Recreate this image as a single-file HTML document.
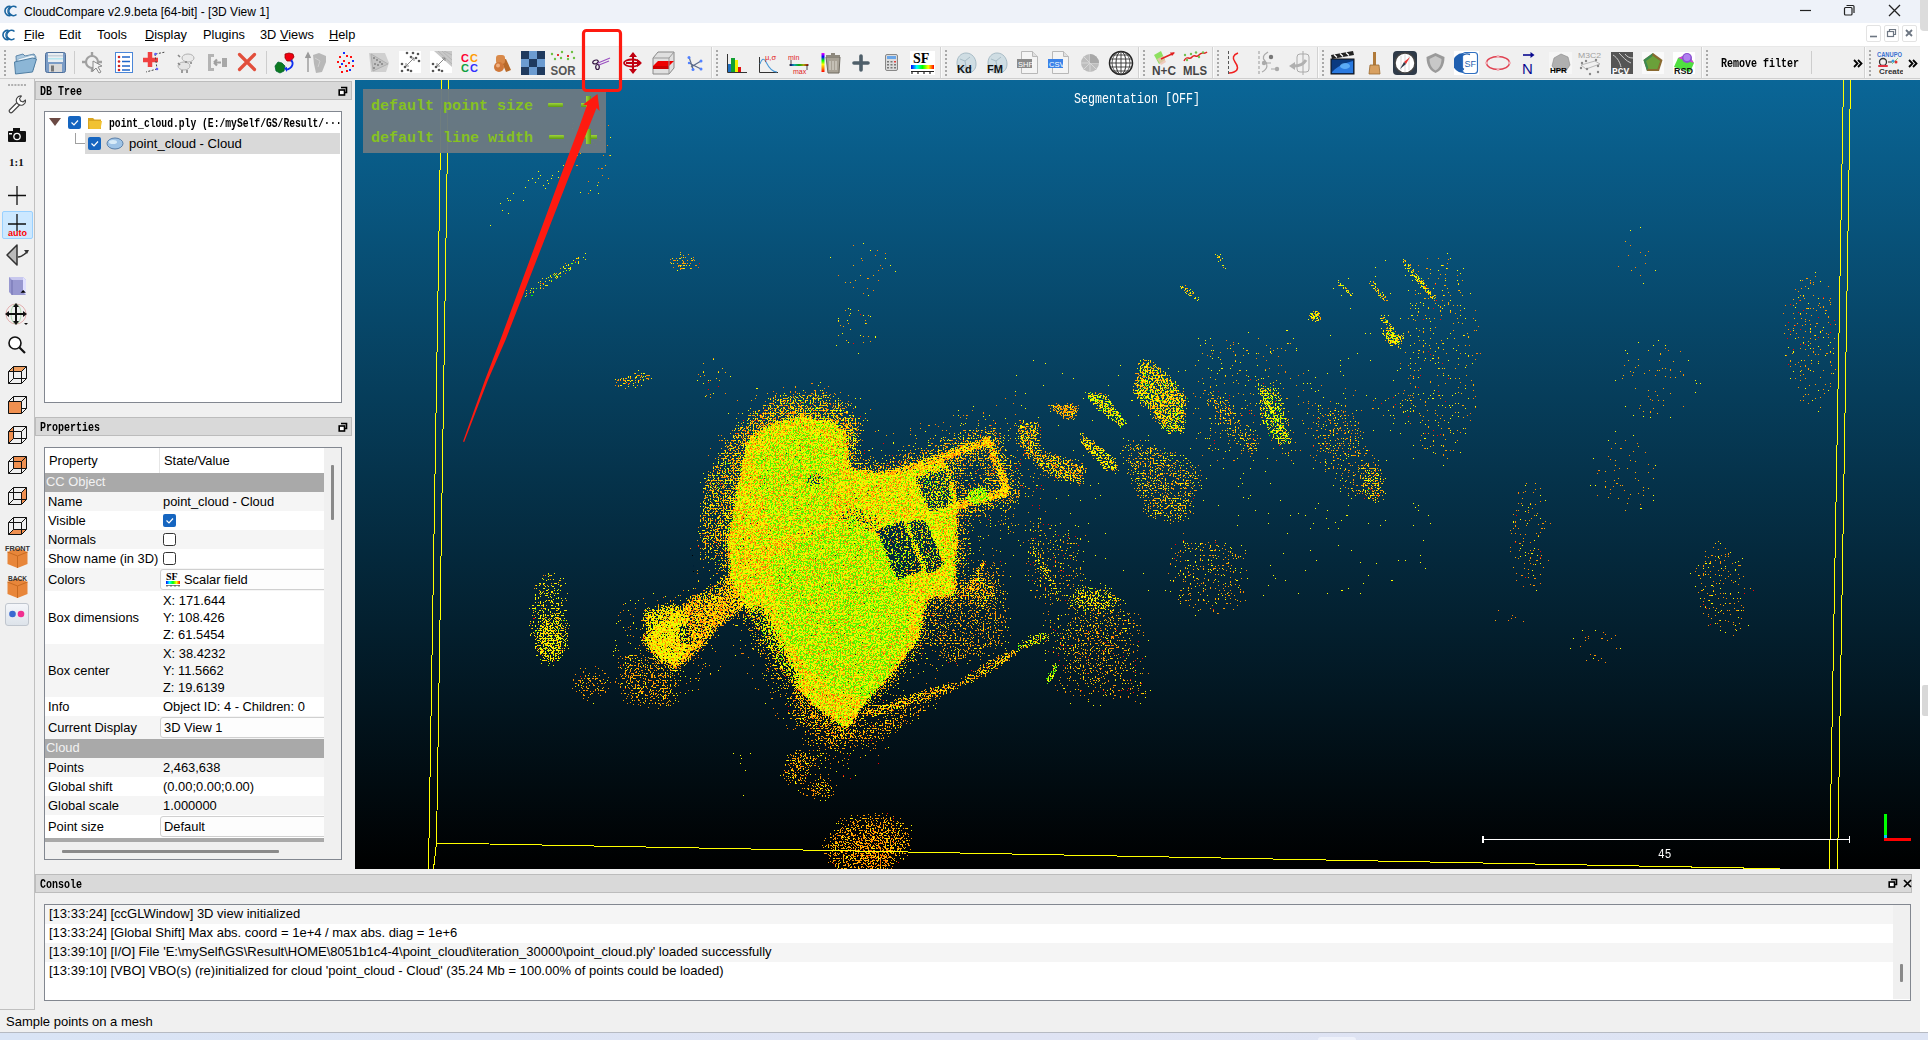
<!DOCTYPE html>
<html><head><meta charset="utf-8"><style>
html,body{margin:0;padding:0;width:1928px;height:1040px;overflow:hidden;background:#fff;position:relative}
.t{position:absolute;white-space:pre;line-height:1.15}
u{text-decoration:underline;text-underline-offset:1px}
</style></head><body>
<svg width="0" height="0" style="position:absolute"><defs><linearGradient id="rbv" x1="0" x2="0" y1="0" y2="1"><stop offset="0" stop-color="#f0f"/><stop offset=".2" stop-color="#00f"/><stop offset=".4" stop-color="#0f0"/><stop offset=".6" stop-color="#ff0"/><stop offset=".8" stop-color="#f80"/><stop offset="1" stop-color="#f00"/></linearGradient><linearGradient id="rb" x1="0" x2="1"><stop offset="0" stop-color="#00f"/><stop offset=".25" stop-color="#0ff"/><stop offset=".5" stop-color="#0f0"/><stop offset=".75" stop-color="#ff0"/><stop offset="1" stop-color="#f00"/></linearGradient></defs></svg>
<div style="position:absolute;left:0px;top:0px;width:1920px;height:23px;background:#eef2f9"></div><svg style="position:absolute;left:3px;top:5px" width="15" height="12" viewBox="0 0 15 12"><path d="M7.5 1.5A4.6 4.6 0 1 0 7.5 10.5" fill="none" stroke="#1a65a0" stroke-width="1.6"/><path d="M13.5 2.5A4.6 4.6 0 1 0 13.5 9.5" fill="none" stroke="#1a65a0" stroke-width="1.6"/><path d="M8.5 1.5A4.6 4.6 0 0 0 8.5 10.5" fill="none" stroke="#1a65a0" stroke-width="1.2"/></svg><div class="t" style="left:24px;top:6px;font-size:12px;color:#000;font-family:'Liberation Sans', sans-serif;">CloudCompare v2.9.beta [64-bit] - [3D View 1]</div><svg style="position:absolute;left:1790px;top:0" width="130" height="23"><path d="M10 10.5h11" stroke="#222" stroke-width="1.2"/><rect x="54.5" y="7.5" width="7.5" height="7.5" fill="none" stroke="#222" stroke-width="1.2" rx="1"/><path d="M56.5 5.5h6.5a1 1 0 0 1 1 1V13" fill="none" stroke="#222" stroke-width="1.2"/><path d="M99 5l11 11M110 5l-11 11" stroke="#222" stroke-width="1.3"/></svg><div style="position:absolute;left:1920px;top:0px;width:8px;height:1040px;background:#ffffff"></div><div style="position:absolute;left:1920px;top:0px;width:8px;height:31px;background:#dcdcdc;border-bottom-left-radius:4px"></div><div style="position:absolute;left:1922px;top:685px;width:6px;height:31px;background:#d8d8d8;border-radius:2px 0 0 2px"></div><div style="position:absolute;left:0px;top:23px;width:1920px;height:23px;background:#fff"></div><div class="t" style="left:24px;top:28px;font-size:12.8px;color:#000;font-family:'Liberation Sans', sans-serif;"><u>F</u>ile</div><div class="t" style="left:59px;top:28px;font-size:12.8px;color:#000;font-family:'Liberation Sans', sans-serif;">Edit</div><div class="t" style="left:97px;top:28px;font-size:12.8px;color:#000;font-family:'Liberation Sans', sans-serif;">Tools</div><div class="t" style="left:145px;top:28px;font-size:12.8px;color:#000;font-family:'Liberation Sans', sans-serif;"><u>D</u>isplay</div><div class="t" style="left:203px;top:28px;font-size:12.8px;color:#000;font-family:'Liberation Sans', sans-serif;">Plugins</div><div class="t" style="left:260px;top:28px;font-size:12.8px;color:#000;font-family:'Liberation Sans', sans-serif;">3D <u>V</u>iews</div><div class="t" style="left:329px;top:28px;font-size:12.8px;color:#000;font-family:'Liberation Sans', sans-serif;"><u>H</u>elp</div><svg style="position:absolute;left:1px;top:28.5px" width="15" height="12" viewBox="0 0 15 12"><path d="M7.5 1.5A4.6 4.6 0 1 0 7.5 10.5" fill="none" stroke="#1a65a0" stroke-width="1.6"/><path d="M13.5 2.5A4.6 4.6 0 1 0 13.5 9.5" fill="none" stroke="#1a65a0" stroke-width="1.6"/><path d="M8.5 1.5A4.6 4.6 0 0 0 8.5 10.5" fill="none" stroke="#1a65a0" stroke-width="1.2"/></svg><div style="position:absolute;left:1866px;top:25px;width:15px;height:17px;background:#fff;border:1px solid #e3e3e3;border-radius:2px;box-sizing:border-box"></div><div style="position:absolute;left:1884px;top:25px;width:15px;height:17px;background:#fff;border:1px solid #e3e3e3;border-radius:2px;box-sizing:border-box"></div><div style="position:absolute;left:1902px;top:25px;width:15px;height:17px;background:#fff;border:1px solid #e3e3e3;border-radius:2px;box-sizing:border-box"></div><svg style="position:absolute;left:1866px;top:25px" width="54" height="17"><path d="M4 11.5h7" stroke="#6d7682" stroke-width="1.6"/><rect x="21.5" y="6.5" width="6" height="5" fill="none" stroke="#6d7682" stroke-width="1.2"/><path d="M23.5 6.5V4.5h6v5h-2" fill="none" stroke="#6d7682" stroke-width="1.2"/><path d="M40 5l6 6M46 5l-6 6" stroke="#6d7682" stroke-width="1.8"/></svg><div style="position:absolute;left:0px;top:46px;width:1920px;height:1px;background:#e8e8e8"></div><div style="position:absolute;left:0px;top:47px;width:1920px;height:32px;background:#f0f0f0"></div><div style="position:absolute;left:0px;top:78px;width:1920px;height:1px;background:#cfcfcf"></div><svg style="position:absolute;left:4px;top:50px" width="3" height="28" viewBox="0 0 3 28"><rect x="0" y="0" width="2" height="2" fill="#a8a8a8"/><rect x="0" y="4" width="2" height="2" fill="#a8a8a8"/><rect x="0" y="8" width="2" height="2" fill="#a8a8a8"/><rect x="0" y="12" width="2" height="2" fill="#a8a8a8"/><rect x="0" y="16" width="2" height="2" fill="#a8a8a8"/><rect x="0" y="20" width="2" height="2" fill="#a8a8a8"/><rect x="0" y="24" width="2" height="2" fill="#a8a8a8"/></svg><svg style="position:absolute;left:13px;top:50px" width="25" height="25" viewBox="0 0 25 25"><path d="M3 6l7-2 2 2 9-2 2 3-3 13-16 3z" fill="#a9c8e0" stroke="#5f88ab" stroke-width="1"/><path d="M5 9l14-4 3 1-6 12-12 4z" fill="#eef5fa" stroke="#8fb0c8" stroke-width=".8"/><path d="M1.5 12l18-4 4 1-4 13-17 2z" fill="#8cb6d6" stroke="#4f7ea3" stroke-width="1"/></svg><svg style="position:absolute;left:44px;top:51px" width="24" height="24" viewBox="0 0 24 24"><rect x="1.5" y="1.5" width="20" height="20" rx="2" fill="#7b9cc6" stroke="#4e6f9a"/><rect x="4" y="2" width="15" height="9" fill="#e9eef2"/><rect x="4" y="4" width="15" height="1.5" fill="#c5d0da"/><rect x="4" y="7" width="15" height="1.5" fill="#b5e6f0"/><rect x="5" y="13" width="13" height="8" fill="#d8d8d8"/><rect x="7" y="14.5" width="3" height="6" fill="#777"/></svg><div style="position:absolute;left:74px;top:51px;width:1px;height:23px;background:#cdcdcd"></div><svg style="position:absolute;left:81px;top:50px" width="24" height="25" viewBox="0 0 24 25"><circle cx="11" cy="12" r="6" fill="none" stroke="#a0a0a0" stroke-width="2.2"/><path d="M11 2v5M11 17v5M1 12h5M16 12h5" stroke="#a0a0a0" stroke-width="2.4"/><path d="M12 11l9 5-4 1 3 5-2 1-3-5-3 3z" fill="#f4f4f4" stroke="#8a8a8a" stroke-width="1"/></svg><svg style="position:absolute;left:114px;top:51px" width="20" height="23" viewBox="0 0 20 23"><rect x="1.5" y="1.5" width="17" height="20" fill="#fff" stroke="#4a86d8"/><g fill="#d02020"><circle cx="5" cy="6" r="1.3"/><circle cx="5" cy="10.5" r="1.3"/><circle cx="5" cy="15" r="1.3"/><circle cx="5" cy="19" r="1.3"/></g><g stroke="#1f66c8" stroke-width="1.6"><path d="M8 6h8M8 10.5h8M8 15h8M8 19h8"/></g></svg><svg style="position:absolute;left:142px;top:50px" width="26" height="25" viewBox="0 0 26 25"><path d="M8 2v15M1 10h15" stroke="#f04040" stroke-width="4.5"/><path d="M13.5 4l10-2M13 4l2 15M15 19l-11 3" stroke="#444" stroke-width="1" stroke-dasharray="2 1.5" fill="none"/><circle cx="13.5" cy="4" r="1.3" fill="#6060ff"/><circle cx="15" cy="19" r="1.3" fill="#6060ff"/></svg><svg style="position:absolute;left:175px;top:50px" width="22" height="25" viewBox="0 0 22 25"><ellipse cx="13" cy="8" rx="6" ry="4" fill="#eaeaea" stroke="#b0b0b0"/><ellipse cx="9" cy="16" rx="6" ry="4" fill="#e5e5e5" stroke="#b0b0b0"/><path d="M3 5l2 2M3 13l2 2M7 20v3M12 20v3M11 11v2M16 12v2" stroke="#888" stroke-width="1.6"/></svg><svg style="position:absolute;left:206px;top:50px" width="23" height="25" viewBox="0 0 23 25"><path d="M2 4h6v3H5v11h3v3H2z" fill="#b4b4b4"/><rect x="16" y="8" width="5" height="9" fill="#a8a8a8"/><path d="M15 12.5H8M8 12.5l3-3M8 12.5l3 3" stroke="#a0a0a0" stroke-width="2.2" fill="none"/></svg><svg style="position:absolute;left:237px;top:52px" width="21" height="21" viewBox="0 0 21 21"><path d="M2.5 2.5l15 15M17.5 2.5l-15 15" stroke="#e24f3c" stroke-width="3.2" stroke-linecap="round"/></svg><div style="position:absolute;left:266px;top:51px;width:1px;height:23px;background:#cdcdcd"></div><svg style="position:absolute;left:274px;top:51px" width="21" height="23" viewBox="0 0 21 23"><path d="M11 3l4-1 4 1 1 3-3 4-4 0-2-3z" fill="#f00010" stroke="#900" stroke-width=".8"/><path d="M1 15l3-4 4 1 3 3-1 5-4 2-4-2z" fill="#0e7a20" stroke="#063" stroke-width=".8"/><path d="M17 9c3 3 2 8-5 10" stroke="#1030f0" stroke-width="1.8" fill="none"/><path d="M10 17l3 4 0-5z" fill="#1030f0"/></svg><svg style="position:absolute;left:305px;top:50px" width="23" height="25" viewBox="0 0 23 25"><path d="M3 22V5M0.5 8L3 3l2.5 5" stroke="#9a9a9a" stroke-width="1.4" fill="#9a9a9a"/><path d="M8 5l6-2 7 3 0 6-4 10-6 1-2-9z" fill="#b8b8b8"/><path d="M10 8l5 3-2 6" stroke="#cfcfcf" fill="none"/></svg><svg style="position:absolute;left:337px;top:52px" width="18" height="21" viewBox="0 0 18 21"><g fill="#ff1010"><rect x="2" y="4" width="2" height="2"/><rect x="9" y="3" width="2" height="2"/><rect x="13" y="4" width="2" height="2"/><rect x="0" y="9" width="2" height="2"/><rect x="6" y="8" width="2" height="2"/><rect x="11" y="10" width="2" height="2"/><rect x="2" y="14" width="2" height="2"/><rect x="8" y="13" width="2" height="2"/><rect x="15" y="13" width="2" height="2"/><rect x="4" y="19" width="2" height="2"/><rect x="9" y="18" width="2" height="2"/></g><g fill="#1030ff"><rect x="6" y="0" width="2" height="2"/><rect x="15" y="8" width="2" height="2"/><rect x="4" y="11" width="2" height="2"/><rect x="12" y="17" width="2" height="2"/></g></svg><svg style="position:absolute;left:368px;top:51px" width="22" height="23" viewBox="0 0 22 23"><path d="M1 2h16l4 10-3 9H3z" fill="#d0d0d0"/><path d="M3 3l17 10L5 20z" fill="#c4c4c4" stroke="#b0b0b0"/><g fill="#555"><circle cx="6" cy="7" r=".8"/><circle cx="9" cy="9" r=".8"/><circle cx="12" cy="11" r=".8"/><circle cx="7" cy="13" r=".8"/><circle cx="10" cy="14" r=".8"/><circle cx="14" cy="13" r=".8"/><circle cx="6" cy="17" r=".8"/></g></svg><svg style="position:absolute;left:399px;top:51px" width="22" height="22" viewBox="0 0 22 22"><rect x="0" y="0" width="22" height="22" fill="#fff"/><g fill="#555"><circle cx="3" cy="13" r="1.3"/><circle cx="6" cy="16" r="1.3"/><circle cx="3" cy="20" r="1.3"/><circle cx="9" cy="19" r="1.3"/><circle cx="12" cy="20" r="1.3"/><circle cx="8" cy="2" r="1.3"/><circle cx="14" cy="2" r="1.3"/><circle cx="19" cy="3" r="1.3"/><circle cx="12" cy="6" r="1.3"/><circle cx="17" cy="7" r="1.3"/><circle cx="20" cy="10" r="1.3"/></g><path d="M7 15l8-8M7 15v-3M7 15h3M15 7v3M15 7h-3" stroke="#888" stroke-width="1" fill="none"/></svg><svg style="position:absolute;left:430px;top:51px" width="22" height="22" viewBox="0 0 22 22"><rect x="0" y="0" width="22" height="22" fill="#fff"/><path d="M4 0h18v16z" fill="#c8c8c8"/><path d="M8 0l14 13M12 0l10 9M22 4L14 0" stroke="#aaa" stroke-width=".6"/><g fill="#555"><circle cx="3" cy="13" r="1.3"/><circle cx="6" cy="16" r="1.3"/><circle cx="3" cy="20" r="1.3"/><circle cx="9" cy="19" r="1.3"/><circle cx="12" cy="20" r="1.3"/></g><path d="M7 15l8-8M7 15v-3M7 15h3M15 7v3M15 7h-3" stroke="#888" stroke-width="1" fill="none"/></svg><svg style="position:absolute;left:461px;top:52px" width="20" height="22" viewBox="0 0 20 22"><g font-family="Liberation Sans" font-weight="bold" font-size="11"><text x="0" y="10" fill="#ff0030">C</text><text x="9" y="10" fill="#ff9a00">C</text><text x="0" y="20" fill="#10a040">C</text><text x="9" y="20" fill="#3030ff">C</text></g></svg><svg style="position:absolute;left:493px;top:54px" width="18" height="19" viewBox="0 0 18 19"><path d="M8 6l5-1 5 11-5 2z" fill="#b86a2a"/><rect x="3" y="1" width="9" height="9" rx="3" fill="#d98a4a"/><circle cx="6" cy="13" r="5" fill="#d0783a"/><circle cx="5" cy="11.5" r="2" fill="#f0b080"/></svg><svg style="position:absolute;left:521px;top:51px" width="24" height="24" viewBox="0 0 24 24"><rect width="24" height="24" fill="#6b9bd0"/><g fill="#1f3a5e"><rect x="0" y="0" width="8" height="8"/><rect x="16" y="0" width="8" height="8"/><rect x="8" y="8" width="8" height="8"/><rect x="0" y="16" width="8" height="8"/><rect x="16" y="16" width="8" height="8"/></g></svg><svg style="position:absolute;left:550px;top:50px" width="27" height="26" viewBox="0 0 27 26"><g fill="#6cc040"><circle cx="2" cy="4" r="1.2"/><circle cx="12" cy="2" r="1.2"/><circle cx="22" cy="2" r="1.2"/><circle cx="5" cy="9" r="1.2"/><circle cx="11" cy="8" r="1.2"/><circle cx="18" cy="9" r="1.2"/><circle cx="24" cy="8" r="1.2"/></g><path d="M7 4l2 2M9 4l-2 2M17 5l2 2M19 5l-2 2" stroke="#e03030" stroke-width="1"/><text x="0.5" y="24.5" font-family="Liberation Sans" font-weight="bold" font-size="13" fill="#555" textLength="25" lengthAdjust="spacingAndGlyphs">SOR</text></svg><svg style="position:absolute;left:592px;top:56px" width="19" height="15" viewBox="0 0 19 15"><ellipse cx="3.5" cy="6" rx="2.8" ry="1.8" fill="none" stroke="#301040" stroke-width="1.2" transform="rotate(-20 3.5 6)"/><ellipse cx="5.5" cy="11" rx="1.8" ry="2.5" fill="none" stroke="#301040" stroke-width="1.2"/><path d="M6 7l12-5M7 9l10-4" stroke="#9a50c0" stroke-width="1.2"/></svg><svg style="position:absolute;left:623px;top:52px" width="20" height="22" viewBox="0 0 20 22"><path d="M10 1v20M3 11h14" stroke="#c00010" stroke-width="2"/><path d="M10 0l-4 5h8zM10 22l-4-5h8zM19 11l-5-4v8z" fill="#c00010"/><ellipse cx="9" cy="11" rx="8" ry="3.5" fill="none" stroke="#c00010" stroke-width="1.8"/></svg><svg style="position:absolute;left:651px;top:51px" width="24" height="24" viewBox="0 0 24 24"><path d="M2 7l5-6h16v16l-5 6H2z" fill="#e0e0e0" stroke="#888" stroke-width="1"/><path d="M2 15l5-5h16l-5 5z" fill="#ee0000"/><path d="M2 15h16v3H2z" fill="#cc0000"/><path d="M2 7h16v16M18 7l5-6" stroke="#999" fill="none"/></svg><svg style="position:absolute;left:687px;top:56px" width="16" height="16" viewBox="0 0 16 16"><path d="M2 1l4 12M2 7l12 6M14 5L4 11" stroke="#5a6a8a" stroke-width="1.2"/><g fill="#5080ff"><circle cx="2" cy="1.5" r="1.5"/><circle cx="14" cy="5" r="1.5"/><circle cx="14" cy="13" r="1.5"/><circle cx="6" cy="13.5" r="1.5"/><circle cx="2" cy="7" r="1.2"/></g></svg><div style="position:absolute;left:711px;top:47px;width:1px;height:31px;background:#d2d2d2"></div><div style="position:absolute;left:712px;top:47px;width:1px;height:31px;background:#fafafa"></div><svg style="position:absolute;left:716px;top:50px" width="3" height="28" viewBox="0 0 3 28"><rect x="0" y="0" width="2" height="2" fill="#a8a8a8"/><rect x="0" y="4" width="2" height="2" fill="#a8a8a8"/><rect x="0" y="8" width="2" height="2" fill="#a8a8a8"/><rect x="0" y="12" width="2" height="2" fill="#a8a8a8"/><rect x="0" y="16" width="2" height="2" fill="#a8a8a8"/><rect x="0" y="20" width="2" height="2" fill="#a8a8a8"/><rect x="0" y="24" width="2" height="2" fill="#a8a8a8"/></svg><svg style="position:absolute;left:726px;top:54px" width="22" height="20" viewBox="0 0 22 20"><path d="M1.5 0v18.5H21" stroke="#333" stroke-width="1" fill="none"/><rect x="2" y="10" width="3" height="8" fill="#1f6fc0"/><rect x="5" y="4" width="4" height="14" fill="#10a030"/><rect x="9" y="6" width="3" height="12" fill="#f0f000"/><rect x="12" y="13" width="3" height="5" fill="#e01010"/></svg><svg style="position:absolute;left:758px;top:53px" width="21" height="21" viewBox="0 0 21 21"><path d="M1.5 4v15.5H20" stroke="#333" stroke-width="1" fill="none"/><path d="M2 11c2-6 4-6 6-2s5 10 11 10" stroke="#4a9ad8" stroke-width="1.1" fill="none"/><text x="7" y="7" font-family="Liberation Sans" font-size="7.5" fill="#e02020">μ,σ</text></svg><svg style="position:absolute;left:788px;top:53px" width="23" height="21" viewBox="0 0 23 21"><text x="0" y="6.5" font-family="Liberation Sans" font-size="7" fill="#e02020">min</text><text x="5" y="20.5" font-family="Liberation Sans" font-size="7" fill="#e02020">max</text><rect x="2" y="11" width="18" height="2" fill="url(#rb)"/><path d="M1 12h20M3 7v6M19 12v5" stroke="#222" stroke-width=".8"/></svg><svg style="position:absolute;left:821px;top:53px" width="21" height="21" viewBox="0 0 21 21"><rect x="0.5" y="0" width="3" height="19" fill="url(#rbv)"/><path d="M5 4h14l-1 16H7z" fill="#a8a296" stroke="#6e6a60"/><rect x="5" y="2" width="14" height="2" fill="#8e897e"/><rect x="10" y="0" width="4" height="2" fill="#8e897e"/><path d="M9 8v9M12 8v9M15 8v9" stroke="#e0ddd5" stroke-width="1"/></svg><svg style="position:absolute;left:852px;top:54px" width="18" height="18" viewBox="0 0 18 18"><path d="M9 2v14M2 9h14" stroke="#4f5f6a" stroke-width="3.6" stroke-linecap="round"/></svg><svg style="position:absolute;left:885px;top:54px" width="14" height="18" viewBox="0 0 14 18"><rect x="0.5" y="0.5" width="12" height="16" rx="1.5" fill="#dcdcdc" stroke="#888"/><rect x="2" y="2" width="9" height="3" fill="#6aa6e8"/><g fill="#777"><rect x="2" y="7" width="2" height="1.5"/><rect x="5.5" y="7" width="2" height="1.5"/><rect x="9" y="7" width="2" height="1.5" fill="#e04040"/><rect x="2" y="10" width="2" height="1.5"/><rect x="5.5" y="10" width="2" height="1.5"/><rect x="9" y="10" width="2" height="1.5"/><rect x="2" y="13" width="2" height="1.5"/><rect x="5.5" y="13" width="2" height="1.5"/><rect x="9" y="13" width="2" height="1.5"/></g></svg><svg style="position:absolute;left:910px;top:51px" width="25" height="24" viewBox="0 0 25 24"><rect width="25" height="24" fill="#fff"/><text x="3" y="12" font-family="Liberation Serif" font-weight="bold" font-size="14" fill="#000">SF</text><rect x="1" y="14" width="23" height="4" fill="url(#rb)"/><path d="M1 20.5h23M2 20v3M8 20v3M14 20v3M20 20v3" stroke="#222" stroke-width="1.2"/></svg><div style="position:absolute;left:940px;top:47px;width:1px;height:31px;background:#d2d2d2"></div><div style="position:absolute;left:941px;top:47px;width:1px;height:31px;background:#fafafa"></div><svg style="position:absolute;left:945px;top:50px" width="3" height="28" viewBox="0 0 3 28"><rect x="0" y="0" width="2" height="2" fill="#a8a8a8"/><rect x="0" y="4" width="2" height="2" fill="#a8a8a8"/><rect x="0" y="8" width="2" height="2" fill="#a8a8a8"/><rect x="0" y="12" width="2" height="2" fill="#a8a8a8"/><rect x="0" y="16" width="2" height="2" fill="#a8a8a8"/><rect x="0" y="20" width="2" height="2" fill="#a8a8a8"/><rect x="0" y="24" width="2" height="2" fill="#a8a8a8"/></svg><svg style="position:absolute;left:954px;top:51px" width="24" height="24" viewBox="0 0 24 24"><path d="M3 12c0-6 4-10 9-10 6 0 10 5 10 11 0 6-4 9-9 9-6 0-10-4-10-10z" fill="#cfdde3" stroke="#a8bcc6"/><path d="M6 8l5 2 5-4M11 10l1 6 6 1M12 16l-5 2" stroke="#a8bcc6" fill="none"/><text x="3" y="22" font-family="Liberation Sans" font-weight="bold" font-size="11" fill="#111">Kd</text></svg><svg style="position:absolute;left:985px;top:51px" width="24" height="24" viewBox="0 0 24 24"><path d="M3 12c0-6 4-10 9-10 6 0 10 5 10 11 0 6-4 9-9 9-6 0-10-4-10-10z" fill="#cfdde3" stroke="#a8bcc6"/><path d="M6 8l5 2 5-4M11 10l1 6 6 1M12 16l-5 2" stroke="#a8bcc6" fill="none"/><text x="2" y="22" font-family="Liberation Sans" font-weight="bold" font-size="11" fill="#111">FM</text></svg><svg style="position:absolute;left:1017px;top:51px" width="22" height="24" viewBox="0 0 22 24"><path d="M4.5 0.5h11l5 5v17h-16z" fill="#f4f4f4" stroke="#b8b8b8"/><path d="M15.5 0.5v5h5" fill="#e0e0e0" stroke="#b8b8b8"/><rect x="0" y="8" width="15" height="9" fill="#8a8a8a"/><text x="1" y="15.5" font-family="Liberation Sans" font-size="7.5" fill="#fff">SHP</text></svg><svg style="position:absolute;left:1048px;top:51px" width="22" height="24" viewBox="0 0 22 24"><path d="M4.5 0.5h11l5 5v17h-16z" fill="#f4f4f4" stroke="#b8b8b8"/><path d="M15.5 0.5v5h5" fill="#e0e0e0" stroke="#b8b8b8"/><rect x="0" y="8" width="15" height="9" fill="#3b82e8"/><text x="1" y="15.5" font-family="Liberation Sans" font-size="7.5" fill="#fff">CSV</text></svg><svg style="position:absolute;left:1080px;top:53px" width="20" height="20" viewBox="0 0 20 20"><circle cx="10" cy="10" r="9" fill="#bdbdbd"/><path d="M10 1v18M1 10h18M3.6 3.6l12.8 12.8M16.4 3.6L3.6 16.4" stroke="#d8d8d8" stroke-width="1"/><path d="M10 10V1A9 9 0 0 1 19 10z" fill="#a8a8a8"/></svg><svg style="position:absolute;left:1108px;top:50px" width="26" height="26" viewBox="0 0 26 26"><circle cx="13" cy="13" r="11.5" fill="#fff" stroke="#222" stroke-width="1.5"/><ellipse cx="13" cy="13" rx="5" ry="11.5" fill="none" stroke="#333"/><ellipse cx="13" cy="13" rx="9" ry="11.5" fill="none" stroke="#333" stroke-width=".8"/><path d="M13 1.5v23M2 9h22M2 17h22M1.5 13h23M4 5h18M4 21h18" stroke="#333" stroke-width=".9"/></svg><div style="position:absolute;left:1138px;top:47px;width:1px;height:31px;background:#d2d2d2"></div><div style="position:absolute;left:1139px;top:47px;width:1px;height:31px;background:#fafafa"></div><svg style="position:absolute;left:1143px;top:50px" width="3" height="28" viewBox="0 0 3 28"><rect x="0" y="0" width="2" height="2" fill="#a8a8a8"/><rect x="0" y="4" width="2" height="2" fill="#a8a8a8"/><rect x="0" y="8" width="2" height="2" fill="#a8a8a8"/><rect x="0" y="12" width="2" height="2" fill="#a8a8a8"/><rect x="0" y="16" width="2" height="2" fill="#a8a8a8"/><rect x="0" y="20" width="2" height="2" fill="#a8a8a8"/><rect x="0" y="24" width="2" height="2" fill="#a8a8a8"/></svg><svg style="position:absolute;left:1152px;top:51px" width="25" height="24" viewBox="0 0 25 24"><path d="M2 4l7-4 4 9-6 4z" fill="#8ee060"/><path d="M5 8l6-3 3 6-5 3z" fill="#f0c0b0" opacity=".8"/><path d="M9 8l13-6" stroke="#e02020" stroke-width="1.4"/><path d="M23 1.5l-5 0 2 3.5z" fill="#e02020"/><text x="0" y="23.5" font-family="Liberation Sans" font-weight="bold" font-size="12.5" fill="#444" textLength="24" lengthAdjust="spacingAndGlyphs">N+C</text></svg><svg style="position:absolute;left:1183px;top:51px" width="25" height="24" viewBox="0 0 25 24"><path d="M1 10c3-7 5 0 8-4s4 2 7-2 5 0 8-3" stroke="#e02020" stroke-width="1.4" fill="none"/><g fill="#70c050"><circle cx="2" cy="4" r="1.2"/><circle cx="8" cy="3" r="1.2"/><circle cx="13" cy="1.5" r="1.2"/><circle cx="20" cy="1.5" r="1.2"/><circle cx="4" cy="9" r="1.2"/><circle cx="16" cy="6" r="1.2"/></g><text x="0" y="23.5" font-family="Liberation Sans" font-weight="bold" font-size="13" fill="#444" textLength="24" lengthAdjust="spacingAndGlyphs">MLS</text></svg><div style="position:absolute;left:1212px;top:47px;width:1px;height:31px;background:#d2d2d2"></div><div style="position:absolute;left:1213px;top:47px;width:1px;height:31px;background:#fafafa"></div><svg style="position:absolute;left:1217px;top:50px" width="3" height="28" viewBox="0 0 3 28"><rect x="0" y="0" width="2" height="2" fill="#a8a8a8"/><rect x="0" y="4" width="2" height="2" fill="#a8a8a8"/><rect x="0" y="8" width="2" height="2" fill="#a8a8a8"/><rect x="0" y="12" width="2" height="2" fill="#a8a8a8"/><rect x="0" y="16" width="2" height="2" fill="#a8a8a8"/><rect x="0" y="20" width="2" height="2" fill="#a8a8a8"/><rect x="0" y="24" width="2" height="2" fill="#a8a8a8"/></svg><svg style="position:absolute;left:1227px;top:51px" width="15" height="24" viewBox="0 0 15 24"><path d="M1.5 0v24" stroke="#555" stroke-width="1" stroke-dasharray="3 2"/><path d="M11 2c-5 2-6 5-3 9s4 8-1 10c-2 1-4 1-5 1" stroke="#f02020" stroke-width="1.5" fill="none"/></svg><svg style="position:absolute;left:1258px;top:51px" width="22" height="24" viewBox="0 0 22 24"><path d="M1 0v24" stroke="#999" stroke-width="1" stroke-dasharray="3 2"/><path d="M10 1c-5 3-6 6-3 9s3 8-3 11" stroke="#aaa" stroke-width="1.3" fill="none"/><circle cx="13" cy="6" r="2.2" fill="#777"/><circle cx="6" cy="12" r="2.2" fill="#aaa"/><circle cx="19" cy="18" r="2.2" fill="#aaa"/><path d="M7 12h6M13 18h4" stroke="#aaa"/></svg><svg style="position:absolute;left:1289px;top:51px" width="22" height="24" viewBox="0 0 22 24"><rect x="8" y="3" width="12" height="18" rx="3" fill="none" stroke="#aaa"/><path d="M14 0v24" stroke="#aaa"/><path d="M17 9c-3 5-7 6-12 6" stroke="#b0b0b0" stroke-width="3" fill="none"/><path d="M0 15l6-4v8z" fill="#b0b0b0"/></svg><div style="position:absolute;left:1317px;top:47px;width:1px;height:31px;background:#d2d2d2"></div><div style="position:absolute;left:1318px;top:47px;width:1px;height:31px;background:#fafafa"></div><svg style="position:absolute;left:1322px;top:50px" width="3" height="28" viewBox="0 0 3 28"><rect x="0" y="0" width="2" height="2" fill="#a8a8a8"/><rect x="0" y="4" width="2" height="2" fill="#a8a8a8"/><rect x="0" y="8" width="2" height="2" fill="#a8a8a8"/><rect x="0" y="12" width="2" height="2" fill="#a8a8a8"/><rect x="0" y="16" width="2" height="2" fill="#a8a8a8"/><rect x="0" y="20" width="2" height="2" fill="#a8a8a8"/><rect x="0" y="24" width="2" height="2" fill="#a8a8a8"/></svg><svg style="position:absolute;left:1330px;top:51px" width="25" height="24" viewBox="0 0 25 24"><path d="M1 4l22-4 1 4-22 4z" fill="#222"/><path d="M4 3.5l3 3M10 2.5l3 3M16 1.5l3 3" stroke="#fff" stroke-width="1.3"/><rect x="1" y="8" width="23" height="15" fill="#0a3a80" stroke="#111"/><path d="M2 21c8-8 14-9 21-11v12H2z" fill="#2a7ae0"/><ellipse cx="15" cy="15" rx="5" ry="3" fill="#70c0ff" opacity=".7"/></svg><svg style="position:absolute;left:1368px;top:51px" width="13" height="25" viewBox="0 0 13 25"><rect x="5" y="1" width="3" height="13" fill="#b07a3a"/><path d="M2 14h9l1 9H1z" fill="#d8a060" stroke="#9a6a30" stroke-width=".8"/></svg><svg style="position:absolute;left:1392px;top:50px" width="26" height="26" viewBox="0 0 26 26"><rect x="1" y="1" width="24" height="24" rx="4" fill="#2e3a48"/><circle cx="13" cy="13" r="10" fill="#fff"/><circle cx="13" cy="13" r="10" fill="none" stroke="#444" stroke-width="1.5"/><path d="M9 6v14M13 4v18M17 6v14" stroke="#ccc" stroke-width=".7"/><path d="M18 7l-4 7-2-2z" fill="#e83030"/><path d="M8 19l4-7 2 2z" fill="#2e3a48"/></svg><svg style="position:absolute;left:1425px;top:52px" width="21" height="22" viewBox="0 0 21 22"><path d="M10.5 1l9 4c0 9-4 14-9 16-5-2-9-7-9-16z" fill="#9a9a9a"/><path d="M10.5 4l6 3c0 6-3 10-6 11.5-3-1.5-6-5.5-6-11.5z" fill="#c8c8c8"/></svg><svg style="position:absolute;left:1454px;top:51px" width="25" height="24" viewBox="0 0 25 24"><rect width="25" height="24" fill="#fff"/><path d="M9 2a10 10 0 0 0 0 20z" fill="#1f5fb0"/><rect x="8.5" y="1.5" width="15" height="21" rx="3" fill="none" stroke="#2f6fc0" stroke-width="1.2"/><path d="M16 3.5a8 8 0 0 0-6 15" stroke="#1f5fb0" stroke-width="1.4" fill="none"/><text x="10.5" y="16" font-family="Liberation Sans" font-size="9" fill="#1f5fb0">SF</text></svg><svg style="position:absolute;left:1485px;top:54px" width="26" height="18" viewBox="0 0 26 18"><ellipse cx="13" cy="9" rx="11.5" ry="6.5" fill="none" stroke="#e04050" stroke-width="1.4"/><g fill="#f0b0b8"><circle cx="13" cy="2.5" r="1.4"/><circle cx="13" cy="15.5" r="1.4"/><circle cx="1.5" cy="9" r="1.4"/><circle cx="24.5" cy="9" r="1.4"/></g></svg><svg style="position:absolute;left:1522px;top:51px" width="14" height="24" viewBox="0 0 14 24"><path d="M1 4h10" stroke="#0a0a90" stroke-width="1.6"/><path d="M12.5 4l-4-3v6z" fill="#0a0a90"/><text x="0" y="22.5" font-family="Liberation Sans" font-size="15" fill="#0a0a90">N</text></svg><svg style="position:absolute;left:1549px;top:52px" width="23" height="23" viewBox="0 0 23 23"><rect width="23" height="22" fill="#f6f6f6"/><path d="M5 6l7-4 7 3 2 8-4 6H7l-4-5z" fill="#b0b0b0" stroke="#888" stroke-width=".6"/><text x="1" y="21" font-family="Liberation Sans" font-weight="bold" font-size="8" fill="#000">HPR</text></svg><svg style="position:absolute;left:1578px;top:51px" width="24" height="25" viewBox="0 0 24 25"><text x="0" y="7" font-family="Liberation Sans" font-size="8" fill="#a0a0a0" textLength="23" lengthAdjust="spacingAndGlyphs">M3C2</text><path d="M3 14l14-4 5 3-14 5z" fill="none" stroke="#aaa" stroke-width=".8"/><g fill="#888"><circle cx="4" cy="12" r="1.2"/><circle cx="8" cy="10" r="1.2"/><circle cx="18" cy="9" r="1.2"/><circle cx="3" cy="17" r="1.2"/><circle cx="9" cy="18" r="1.2"/><circle cx="20" cy="15" r="1.2"/><circle cx="12" cy="23" r="1.2"/><circle cx="20" cy="21" r="1.2"/></g></svg><svg style="position:absolute;left:1611px;top:52px" width="23" height="23" viewBox="0 0 23 23"><rect width="22" height="22" fill="#555"/><path d="M2 3c5 3 7 8 8 12M8 1c4 4 7 8 12 10M14 2c2 3 5 4 8 4" stroke="#ccc" stroke-width="1" fill="none"/><text x="1" y="21.5" font-family="Liberation Mono" font-weight="bold" font-size="9.5" fill="#fff">PCV</text></svg><svg style="position:absolute;left:1642px;top:52px" width="22" height="22" viewBox="0 0 22 22"><rect width="22" height="22" fill="#fafafa"/><path d="M11 1l9.5 7-3.5 11H5L1.5 8z" fill="#8a6a30"/><path d="M11 4l7 5-2.7 8H6.7L4 9z" fill="#5a9a30"/><path d="M11 1l-9.5 7 3.5 11" fill="#3c8a50"/><path d="M11 4l7 5-2.7 8H6.7L4 9z" fill="#6aa03a"/></svg><svg style="position:absolute;left:1673px;top:52px" width="22" height="23" viewBox="0 0 22 23"><rect width="22" height="22" fill="#fff"/><path d="M1 15l4-9 10-4 6 9-4 9z" fill="#50e040"/><path d="M5 6l10-4 6 9" fill="#f020f0" opacity=".85"/><ellipse cx="14" cy="6" rx="5" ry="5" fill="#8a50d0"/><ellipse cx="14" cy="5.5" rx="3.5" ry="3.5" fill="#b080f0"/><text x="1" y="21.5" font-family="Liberation Sans" font-weight="bold" font-size="9" fill="#111">RSD</text></svg><div style="position:absolute;left:1701px;top:47px;width:1px;height:31px;background:#d2d2d2"></div><div style="position:absolute;left:1702px;top:47px;width:1px;height:31px;background:#fafafa"></div><svg style="position:absolute;left:1706px;top:50px" width="3" height="28" viewBox="0 0 3 28"><rect x="0" y="0" width="2" height="2" fill="#a8a8a8"/><rect x="0" y="4" width="2" height="2" fill="#a8a8a8"/><rect x="0" y="8" width="2" height="2" fill="#a8a8a8"/><rect x="0" y="12" width="2" height="2" fill="#a8a8a8"/><rect x="0" y="16" width="2" height="2" fill="#a8a8a8"/><rect x="0" y="20" width="2" height="2" fill="#a8a8a8"/><rect x="0" y="24" width="2" height="2" fill="#a8a8a8"/></svg><div class="t" style="left:1721px;top:57px;font-size:12.5px;font-family:'Liberation Mono',monospace;font-weight:bold;color:#000;transform:scaleX(0.8);transform-origin:0 0">Remove filter</div><div style="position:absolute;left:1811px;top:51px;width:1px;height:23px;background:#cdcdcd"></div><svg style="position:absolute;left:1853px;top:59px" width="10" height="9" viewBox="0 0 10 9"><path d="M1 1l3.5 3.5L1 8M5 1l3.5 3.5L5 8" stroke="#000" stroke-width="1.8" fill="none"/></svg><div style="position:absolute;left:1864px;top:47px;width:1px;height:31px;background:#d2d2d2"></div><div style="position:absolute;left:1865px;top:47px;width:1px;height:31px;background:#fafafa"></div><svg style="position:absolute;left:1869px;top:50px" width="3" height="28" viewBox="0 0 3 28"><rect x="0" y="0" width="2" height="2" fill="#a8a8a8"/><rect x="0" y="4" width="2" height="2" fill="#a8a8a8"/><rect x="0" y="8" width="2" height="2" fill="#a8a8a8"/><rect x="0" y="12" width="2" height="2" fill="#a8a8a8"/><rect x="0" y="16" width="2" height="2" fill="#a8a8a8"/><rect x="0" y="20" width="2" height="2" fill="#a8a8a8"/><rect x="0" y="24" width="2" height="2" fill="#a8a8a8"/></svg><svg style="position:absolute;left:1877px;top:51px" width="26" height="24" viewBox="0 0 26 24"><text x="0" y="6" font-family="Liberation Sans" font-weight="bold" font-size="6.5" fill="#3a70d0" textLength="25" lengthAdjust="spacingAndGlyphs">CANUPO</text><circle cx="6" cy="11" r="3.5" fill="none" stroke="#333" stroke-width="1.3"/><path d="M11 11h4" stroke="#333"/><path d="M15 13l6-6" stroke="#8c8" /><circle cx="19" cy="11" r="1.5" fill="#e03030"/><circle cx="16" cy="10" r="1.5" fill="#3aa0e0"/><rect x="1" y="14" width="10" height="2" rx="1" fill="#e03040"/><text x="2" y="23" font-family="Liberation Sans" font-weight="bold" font-size="8" fill="#333">Create</text></svg><svg style="position:absolute;left:1908px;top:59px" width="10" height="9" viewBox="0 0 10 9"><path d="M1 1l3.5 3.5L1 8M5 1l3.5 3.5L5 8" stroke="#000" stroke-width="1.8" fill="none"/></svg><div style="position:absolute;left:0px;top:79px;width:1920px;height:953px;background:#f0f0f0"></div><div style="position:absolute;left:34px;top:79px;width:1px;height:931px;background:#c0c0c0"></div><div style="position:absolute;left:0px;top:1009px;width:35px;height:1px;background:#c0c0c0"></div><svg style="position:absolute;left:8px;top:84px" width="20" height="3" viewBox="0 0 20 3"><rect x="0.0" y="0" width="2" height="2" fill="#b0b0b0"/><rect x="3.2" y="0" width="2" height="2" fill="#b0b0b0"/><rect x="6.4" y="0" width="2" height="2" fill="#b0b0b0"/><rect x="9.6" y="0" width="2" height="2" fill="#b0b0b0"/><rect x="12.8" y="0" width="2" height="2" fill="#b0b0b0"/><rect x="16.0" y="0" width="2" height="2" fill="#b0b0b0"/></svg><svg style="position:absolute;left:8px;top:94px" width="18" height="20" viewBox="0 0 18 20"><path d="M3 17l8.5-8.5" stroke="#444" stroke-width="4.6" stroke-linecap="round"/><path d="M3 17l8.5-8.5" stroke="#fff" stroke-width="2.4" stroke-linecap="round"/><path d="M9.5 9.5a4.5 4.5 0 0 1 4-7.5l-2 2.5 1 2.5 2.5 1 2.5-2a4.5 4.5 0 0 1-7.5 4z" fill="#fff" stroke="#444" stroke-width="1.1" stroke-linejoin="round"/></svg><svg style="position:absolute;left:7px;top:127px" width="20" height="16" viewBox="0 0 20 16"><rect x="1" y="4" width="18" height="11" rx="1" fill="#111"/><rect x="6" y="1" width="7" height="4" fill="#111"/><circle cx="10" cy="9.5" r="3.8" fill="#fff"/><circle cx="10" cy="9.5" r="2.5" fill="#111"/><rect x="2" y="6" width="3" height="1.5" fill="#fff"/></svg><div class="t" style="left:9px;top:157px;font:bold 11px/1 'Liberation Serif',serif;color:#111">1:1</div><svg style="position:absolute;left:7px;top:185px" width="20" height="21" viewBox="0 0 20 21"><path d="M10 1v19M1 10.5h18" stroke="#111" stroke-width="1.3"/></svg><div style="position:absolute;left:2px;top:211px;width:31px;height:28px;background:#cce8ff;border:1px solid #99d1ff;box-sizing:border-box;border-radius:2px"></div><svg style="position:absolute;left:7px;top:213px" width="20" height="24" viewBox="0 0 20 24"><path d="M10 1v17M1 11h18" stroke="#111" stroke-width="1.3"/><text x="1" y="23" font-family="Liberation Sans" font-weight="bold" font-size="9" fill="#f00">auto</text></svg><svg style="position:absolute;left:5px;top:243px" width="25" height="24" viewBox="0 0 25 24"><path d="M12 2L2 12l10 10z" fill="#bbb" stroke="#333" stroke-width="1.5" stroke-linejoin="round"/><path d="M13 14c4 0 6-2 9-5" stroke="#333" stroke-width="1.4" fill="none"/><path d="M24 7l-5 0 3 4z" fill="#333"/></svg><svg style="position:absolute;left:5px;top:274px" width="24" height="24" viewBox="0 0 24 24"><path d="M4 3h14l3 3v15H7l-3-3z" fill="#9898d0"/><path d="M4 3h14l3 3H7z" fill="#c8c8ee"/><path d="M18 3l3 3v15l-3-3z" fill="#e0e0ff"/><path d="M7 6v15" stroke="#7070b0"/><path d="M18 20l3 3h-6z" fill="#000" transform="translate(2 -2) scale(0.9)"/></svg><svg style="position:absolute;left:4px;top:302px" width="26" height="24" viewBox="0 0 26 24"><ellipse cx="12" cy="12" rx="10" ry="10" fill="none" stroke="#e0a0a0" stroke-width=".8"/><ellipse cx="12" cy="12" rx="5" ry="10" fill="none" stroke="#a0d0a0" stroke-width=".8"/><path d="M12 3v18M3 12h18" stroke="#111" stroke-width="2"/><path d="M12 1l-3 4h6zM12 23l-3-4h6zM1 12l4-3v6zM23 12l-4-3v6z" fill="#111"/><path d="M20 21l4 0-2 2z" fill="#111"/></svg><svg style="position:absolute;left:7px;top:335px" width="20" height="20" viewBox="0 0 20 20"><circle cx="8" cy="8" r="6" fill="#fff" stroke="#111" stroke-width="1.6"/><path d="M12.5 12.5l5.5 5.5" stroke="#111" stroke-width="2.2"/></svg><svg style="position:absolute;left:7px;top:364px" width="21" height="22" viewBox="0 0 21 22"><path d="M1.5 7.5l5-5h13l-5 5z" fill="#f0a060"/><path d="M6.5 2.5h13v12h-13z" fill="none" stroke="#111"/><path d="M1.5 7.5h13v12h-13z" fill="none" stroke="#111"/><path d="M1.5 7.5l5-5M14.5 7.5l5-5M14.5 19.5l5-5M1.5 19.5l5-5" stroke="#111"/></svg><svg style="position:absolute;left:7px;top:394px" width="21" height="22" viewBox="0 0 21 22"><path d="M1.5 7.5h13v12h-13z" fill="#f09050"/><path d="M6.5 2.5h13v12h-13z" fill="none" stroke="#111"/><path d="M1.5 7.5h13v12h-13z" fill="#f09050" stroke="#111"/><path d="M1.5 7.5l5-5M14.5 7.5l5-5M14.5 19.5l5-5" stroke="#111"/></svg><svg style="position:absolute;left:7px;top:424px" width="21" height="22" viewBox="0 0 21 22"><path d="M1.5 7.5l5-5v12l-5 5z" fill="#f09050"/><path d="M6.5 2.5h13v12h-13z" fill="none" stroke="#111"/><path d="M1.5 7.5h13v12h-13z" fill="none" stroke="#111"/><path d="M1.5 7.5l5-5M14.5 7.5l5-5M14.5 19.5l5-5M1.5 19.5l5-5" stroke="#111"/></svg><svg style="position:absolute;left:7px;top:454px" width="21" height="22" viewBox="0 0 21 22"><path d="M6.5 2.5h13v12h-13z" fill="#f09050"/><path d="M6.5 2.5h13v12h-13z" fill="none" stroke="#111"/><path d="M1.5 7.5h13v12h-13z" fill="none" stroke="#111"/><path d="M1.5 7.5l5-5M14.5 7.5l5-5M14.5 19.5l5-5M1.5 19.5l5-5" stroke="#111"/></svg><svg style="position:absolute;left:7px;top:485px" width="21" height="22" viewBox="0 0 21 22"><path d="M14.5 7.5l5-5v12l-5 5z" fill="#f09050"/><path d="M6.5 2.5h13v12h-13z" fill="none" stroke="#111"/><path d="M1.5 7.5h13v12h-13z" fill="none" stroke="#111"/><path d="M1.5 7.5l5-5M14.5 7.5l5-5M14.5 19.5l5-5M1.5 19.5l5-5" stroke="#111"/></svg><svg style="position:absolute;left:7px;top:515px" width="21" height="22" viewBox="0 0 21 22"><path d="M1.5 19.5l5-5h13l-5 5z" fill="#f09050"/><path d="M6.5 2.5h13v12h-13z" fill="none" stroke="#111"/><path d="M1.5 7.5h13v12h-13z" fill="none" stroke="#111"/><path d="M1.5 7.5l5-5M14.5 7.5l5-5M14.5 19.5l5-5M1.5 19.5l5-5" stroke="#111"/></svg><svg style="position:absolute;left:4px;top:542px" width="27" height="27" viewBox="0 0 27 27"><path d="M13.5 6l10 4v12l-10 4-10-4V10z" fill="#e8863a"/><path d="M3.5 10l10 4 10-4" stroke="#c86a20" fill="none"/><path d="M13.5 14v12" stroke="#c86a20"/><text x="1" y="9" font-family="Liberation Sans" font-weight="bold" font-size="8" fill="#333" textLength="25" lengthAdjust="spacingAndGlyphs">FRONT</text></svg><svg style="position:absolute;left:4px;top:572px" width="27" height="27" viewBox="0 0 27 27"><path d="M13.5 6l10 4v12l-10 4-10-4V10z" fill="#e8863a"/><path d="M3.5 10l10 4 10-4" stroke="#c86a20" fill="none"/><path d="M13.5 14v12" stroke="#c86a20"/><text x="4" y="9" font-family="Liberation Sans" font-weight="bold" font-size="8" fill="#333" textLength="19" lengthAdjust="spacingAndGlyphs">BACK</text></svg><div style="position:absolute;left:5px;top:603px;width:24px;height:23px;background:linear-gradient(#f4f6fa,#dde3ea);border:1px solid #c0c6ce;box-sizing:border-box;border-radius:3px"></div><svg style="position:absolute;left:8px;top:609px" width="18" height="10" viewBox="0 0 18 10"><circle cx="4.5" cy="5" r="3.3" fill="#3a6ad0"/><circle cx="13" cy="5" r="3.3" fill="#f03090"/></svg><div style="position:absolute;left:35px;top:81px;width:317px;height:19px;background:#d9d9d9;border:1px solid #bcbcbc;box-sizing:border-box"></div><div class="t" style="left:40px;top:85px;font-size:12.2px;color:#000;font-family:'Liberation Mono', monospace;font-weight:bold;transform:scaleX(0.82);transform-origin:0 0;">DB Tree</div><svg style="position:absolute;left:338px;top:86px" width="10" height="10"><path d="M3 1.5h5.5v5H6.5" fill="none" stroke="#000" stroke-width="1.6"/><rect x="1.2" y="4" width="5.3" height="5" fill="#fff" stroke="#000" stroke-width="1.6"/></svg><div style="position:absolute;left:44px;top:111px;width:298px;height:292px;background:#fff;border:1px solid #828790;box-sizing:border-box"></div><svg style="position:absolute;left:49px;top:116px" width="60" height="16"><path d="M0 2h12l-6 8z" fill="#6b4a44"/><rect x="19" y="0" width="13" height="13" rx="2" fill="#1565c0"/><path d="M22.5 6.5l2.5 2.5 4-4.5" stroke="#fff" stroke-width="1.2" fill="none"/><path d="M39 2h5l1.5 1.5h6.5v9.5h-13z" fill="#d9a520"/><path d="M40 5h13l-1.5 8h-11z" fill="#f1c232"/></svg><div class="t" style="left:109px;top:117px;font-size:12.5px;color:#000;font-family:'Liberation Mono', monospace;font-weight:bold;transform:scaleX(0.775);transform-origin:0 0;">point_cloud.ply (E:/mySelf/GS/Result/···</div><div style="position:absolute;left:85px;top:133px;width:255px;height:21px;background:#d9d9d9"></div><div style="position:absolute;left:75px;top:133px;width:1px;height:11px;background:#a0a0a0"></div><div style="position:absolute;left:75px;top:143px;width:10px;height:1px;background:#a0a0a0"></div><svg style="position:absolute;left:88px;top:137px" width="40" height="14"><rect x="0" y="0" width="13" height="13" rx="2" fill="#1565c0"/><path d="M3.5 6.5l2.5 2.5 4-4.5" stroke="#fff" stroke-width="1.2" fill="none"/><ellipse cx="27" cy="6.5" rx="8" ry="5.5" fill="#9ec3e6" stroke="#5a7fa8" stroke-width="1"/><ellipse cx="25" cy="5" rx="4" ry="2" fill="#d8ebf8"/></svg><div class="t" style="left:129px;top:136px;font-size:13.1px;color:#000;font-family:'Liberation Sans', sans-serif;">point_cloud - Cloud</div><div style="position:absolute;left:35px;top:417px;width:317px;height:19px;background:#d9d9d9;border:1px solid #bcbcbc;box-sizing:border-box"></div><div class="t" style="left:40px;top:421px;font-size:12.2px;color:#000;font-family:'Liberation Mono', monospace;font-weight:bold;transform:scaleX(0.82);transform-origin:0 0;">Properties</div><svg style="position:absolute;left:338px;top:422px" width="10" height="10"><path d="M3 1.5h5.5v5H6.5" fill="none" stroke="#000" stroke-width="1.6"/><rect x="1.2" y="4" width="5.3" height="5" fill="#fff" stroke="#000" stroke-width="1.6"/></svg><div style="position:absolute;left:44px;top:447px;width:298px;height:413px;background:#f0f0f0;border:1px solid #828790;box-sizing:border-box"></div><div style="position:absolute;left:45px;top:448px;width:279px;height:25px;background:#fff"></div><div style="position:absolute;left:159px;top:448px;width:1px;height:25px;background:#e6e6e6"></div><div class="t" style="left:49px;top:454px;font-size:12.9px;color:#000;font-family:'Liberation Sans', sans-serif;">Property</div><div class="t" style="left:164px;top:454px;font-size:12.9px;color:#000;font-family:'Liberation Sans', sans-serif;">State/Value</div><div style="position:absolute;left:45px;top:473px;width:279px;height:19px;background:#a9a9a9"></div><div class="t" style="left:46px;top:475px;font-size:12.9px;color:#f2f2f2;font-family:'Liberation Sans', sans-serif;">CC Object</div><div style="position:absolute;left:45px;top:492px;width:279px;height:19px;background:#f5f5f5"></div><div class="t" style="left:48px;top:494.5px;font-size:12.9px;color:#000;font-family:'Liberation Sans', sans-serif;">Name</div><div class="t" style="left:163px;top:494.5px;font-size:12.9px;color:#000;font-family:'Liberation Sans', sans-serif;">point_cloud - Cloud</div><div style="position:absolute;left:45px;top:511px;width:279px;height:19px;background:#fff"></div><div class="t" style="left:48px;top:513.5px;font-size:12.9px;color:#000;font-family:'Liberation Sans', sans-serif;">Visible</div><svg style="position:absolute;left:163px;top:514px" width="14" height="14"><rect x="0" y="0" width="13" height="13" rx="2" fill="#1565c0"/><path d="M3.5 6.5l2.5 2.5 4-4.5" stroke="#fff" stroke-width="1.2" fill="none"/></svg><div style="position:absolute;left:45px;top:530px;width:279px;height:19px;background:#f5f5f5"></div><div class="t" style="left:48px;top:532.5px;font-size:12.9px;color:#000;font-family:'Liberation Sans', sans-serif;">Normals</div><svg style="position:absolute;left:163px;top:533px" width="14" height="14"><rect x="0.5" y="0.5" width="12" height="12" rx="2" fill="#fff" stroke="#333" stroke-width="1"/></svg><div style="position:absolute;left:45px;top:549px;width:279px;height:19px;background:#fff"></div><div class="t" style="left:48px;top:551.5px;font-size:12.9px;color:#000;font-family:'Liberation Sans', sans-serif;">Show name (in 3D)</div><svg style="position:absolute;left:163px;top:552px" width="14" height="14"><rect x="0.5" y="0.5" width="12" height="12" rx="2" fill="#fff" stroke="#333" stroke-width="1"/></svg><div style="position:absolute;left:45px;top:568px;width:279px;height:23px;background:#f5f5f5"></div><div class="t" style="left:48px;top:572.5px;font-size:12.9px;color:#000;font-family:'Liberation Sans', sans-serif;">Colors</div><div style="position:absolute;left:160px;top:569px;width:170px;height:21px;background:#fdfdfd;border:1px solid #d0d0d0;border-radius:3px;box-sizing:border-box"></div><svg style="position:absolute;left:165px;top:571px" width="16" height="16"><text x="1" y="9" font-family="Liberation Serif" font-weight="bold" font-size="10">SF</text><rect x="1" y="10" width="14" height="3" fill="url(#rb)"/><path d="M1 14.5h14M2 14v2M6 14v2M10 14v2M14 14v2" stroke="#333" stroke-width="0.6"/></svg><div class="t" style="left:184px;top:572.5px;font-size:12.9px;color:#000;font-family:'Liberation Sans', sans-serif;">Scalar field</div><div style="position:absolute;left:45px;top:591px;width:279px;height:53px;background:#fff"></div><div class="t" style="left:48px;top:610.5px;font-size:12.9px;color:#000;font-family:'Liberation Sans', sans-serif;">Box dimensions</div><div class="t" style="left:163px;top:592px;font-size:12.9px;line-height:17px;font-family:'Liberation Sans', sans-serif">X: 171.644<br>Y: 108.426<br>Z: 61.5454</div><div style="position:absolute;left:45px;top:644px;width:279px;height:53px;background:#f5f5f5"></div><div class="t" style="left:48px;top:663.5px;font-size:12.9px;color:#000;font-family:'Liberation Sans', sans-serif;">Box center</div><div class="t" style="left:163px;top:645px;font-size:12.9px;line-height:17px;font-family:'Liberation Sans', sans-serif">X: 38.4232<br>Y: 11.5662<br>Z: 19.6139</div><div style="position:absolute;left:45px;top:697px;width:279px;height:19px;background:#fff"></div><div class="t" style="left:48px;top:699.5px;font-size:12.9px;color:#000;font-family:'Liberation Sans', sans-serif;">Info</div><div class="t" style="left:163px;top:699.5px;font-size:12.9px;color:#000;font-family:'Liberation Sans', sans-serif;">Object ID: 4 - Children: 0</div><div style="position:absolute;left:45px;top:716px;width:279px;height:23px;background:#f5f5f5"></div><div class="t" style="left:48px;top:720.5px;font-size:12.9px;color:#000;font-family:'Liberation Sans', sans-serif;">Current Display</div><div style="position:absolute;left:160px;top:717px;width:170px;height:21px;background:#fdfdfd;border:1px solid #d0d0d0;border-radius:3px;box-sizing:border-box"></div><div class="t" style="left:164px;top:720.5px;font-size:12.9px;color:#000;font-family:'Liberation Sans', sans-serif;">3D View 1</div><div style="position:absolute;left:45px;top:739px;width:279px;height:19px;background:#a9a9a9"></div><div class="t" style="left:46px;top:741px;font-size:12.9px;color:#f2f2f2;font-family:'Liberation Sans', sans-serif;">Cloud</div><div style="position:absolute;left:45px;top:758px;width:279px;height:19px;background:#f5f5f5"></div><div class="t" style="left:48px;top:760.5px;font-size:12.9px;color:#000;font-family:'Liberation Sans', sans-serif;">Points</div><div class="t" style="left:163px;top:760.5px;font-size:12.9px;color:#000;font-family:'Liberation Sans', sans-serif;">2,463,638</div><div style="position:absolute;left:45px;top:777px;width:279px;height:19px;background:#fff"></div><div class="t" style="left:48px;top:779.5px;font-size:12.9px;color:#000;font-family:'Liberation Sans', sans-serif;">Global shift</div><div class="t" style="left:163px;top:779.5px;font-size:12.9px;color:#000;font-family:'Liberation Sans', sans-serif;">(0.00;0.00;0.00)</div><div style="position:absolute;left:45px;top:796px;width:279px;height:19px;background:#f5f5f5"></div><div class="t" style="left:48px;top:798.5px;font-size:12.9px;color:#000;font-family:'Liberation Sans', sans-serif;">Global scale</div><div class="t" style="left:163px;top:798.5px;font-size:12.9px;color:#000;font-family:'Liberation Sans', sans-serif;">1.000000</div><div style="position:absolute;left:45px;top:815px;width:279px;height:23px;background:#fff"></div><div class="t" style="left:48px;top:819.5px;font-size:12.9px;color:#000;font-family:'Liberation Sans', sans-serif;">Point size</div><div style="position:absolute;left:160px;top:816px;width:170px;height:21px;background:#fdfdfd;border:1px solid #d0d0d0;border-radius:3px;box-sizing:border-box"></div><div class="t" style="left:164px;top:819.5px;font-size:12.9px;color:#000;font-family:'Liberation Sans', sans-serif;">Default</div><div style="position:absolute;left:45px;top:838px;width:279px;height:4px;background:#a9a9a9"></div><div style="position:absolute;left:324px;top:448px;width:17px;height:394px;background:#f0f0f0"></div><div style="position:absolute;left:331px;top:465px;width:3px;height:55px;background:#8a8a8a;border-radius:1px"></div><div style="position:absolute;left:62px;top:850px;width:217px;height:3px;background:#8a8a8a;border-radius:1px"></div><div style="position:absolute;left:355px;top:80px;width:1565px;height:789px;overflow:hidden;background:linear-gradient(to bottom,#0a6697 0%,#000 100%)"><svg style="position:absolute;left:0;top:0" width="1565" height="789" viewBox="355 80 1565 789"><defs><linearGradient id="bgg" gradientUnits="userSpaceOnUse" x1="0" y1="80" x2="0" y2="869"><stop offset="0" stop-color="#0a6697"/><stop offset="1" stop-color="#000"/></linearGradient><filter id="nO0" filterUnits="userSpaceOnUse" x="355" y="80" width="1565" height="789" color-interpolation-filters="sRGB"><feGaussianBlur in="SourceGraphic" stdDeviation="0.8" result="b"/><feTurbulence type="fractalNoise" baseFrequency="0.6" numOctaves="1" seed="21" result="n"/><feColorMatrix in="n" type="matrix" values="0 0 0 0 0 0 0 0 0 0 0 0 0 0 0 1 0 0 0 0"/><feComponentTransfer result="na"><feFuncA type="table" tableValues="0 0 0 0 0 0 0 .001 .004 .017 .046 .083 .128 .2 .28 .382 .528 .637 .742 .821 .89 .931 .964 .987 .997 .999 1 1 1 1 1 1 1"/></feComponentTransfer><feComposite in="b" in2="na" operator="arithmetic" k1="0" k2="60" k3="-60" k4="-0.4" result="m"/><feComposite in="b" in2="m" operator="in" result="c"/><feComponentTransfer in="c"><feFuncA type="linear" slope="1000"/></feComponentTransfer></filter><filter id="nO2" filterUnits="userSpaceOnUse" x="355" y="80" width="1565" height="789" color-interpolation-filters="sRGB"><feGaussianBlur in="SourceGraphic" stdDeviation="1.2" result="b"/><feTurbulence type="fractalNoise" baseFrequency="0.6" numOctaves="1" seed="23" result="n"/><feColorMatrix in="n" type="matrix" values="0 0 0 0 0 0 0 0 0 0 0 0 0 0 0 1 0 0 0 0"/><feComponentTransfer result="na"><feFuncA type="table" tableValues="0 0 0 0 0 0 0 .001 .004 .017 .046 .083 .128 .2 .28 .382 .528 .637 .742 .821 .89 .931 .964 .987 .997 .999 1 1 1 1 1 1 1"/></feComponentTransfer><feComposite in="b" in2="na" operator="arithmetic" k1="0" k2="60" k3="-60" k4="-0.4" result="m"/><feComposite in="b" in2="m" operator="in" result="c"/><feComponentTransfer in="c"><feFuncA type="linear" slope="1000"/></feComponentTransfer></filter><filter id="nO3" filterUnits="userSpaceOnUse" x="355" y="80" width="1565" height="789" color-interpolation-filters="sRGB"><feGaussianBlur in="SourceGraphic" stdDeviation="1.5" result="b"/><feTurbulence type="fractalNoise" baseFrequency="0.6" numOctaves="1" seed="24" result="n"/><feColorMatrix in="n" type="matrix" values="0 0 0 0 0 0 0 0 0 0 0 0 0 0 0 1 0 0 0 0"/><feComponentTransfer result="na"><feFuncA type="table" tableValues="0 0 0 0 0 0 0 .001 .004 .017 .046 .083 .128 .2 .28 .382 .528 .637 .742 .821 .89 .931 .964 .987 .997 .999 1 1 1 1 1 1 1"/></feComponentTransfer><feComposite in="b" in2="na" operator="arithmetic" k1="0" k2="60" k3="-60" k4="-0.4" result="m"/><feComposite in="b" in2="m" operator="in" result="c"/><feComponentTransfer in="c"><feFuncA type="linear" slope="1000"/></feComponentTransfer></filter><filter id="nO4" filterUnits="userSpaceOnUse" x="355" y="80" width="1565" height="789" color-interpolation-filters="sRGB"><feGaussianBlur in="SourceGraphic" stdDeviation="2" result="b"/><feTurbulence type="fractalNoise" baseFrequency="0.6" numOctaves="1" seed="25" result="n"/><feColorMatrix in="n" type="matrix" values="0 0 0 0 0 0 0 0 0 0 0 0 0 0 0 1 0 0 0 0"/><feComponentTransfer result="na"><feFuncA type="table" tableValues="0 0 0 0 0 0 0 .001 .004 .017 .046 .083 .128 .2 .28 .382 .528 .637 .742 .821 .89 .931 .964 .987 .997 .999 1 1 1 1 1 1 1"/></feComponentTransfer><feComposite in="b" in2="na" operator="arithmetic" k1="0" k2="60" k3="-60" k4="-0.4" result="m"/><feComposite in="b" in2="m" operator="in" result="c"/><feComponentTransfer in="c"><feFuncA type="linear" slope="1000"/></feComponentTransfer></filter><filter id="nO5" filterUnits="userSpaceOnUse" x="355" y="80" width="1565" height="789" color-interpolation-filters="sRGB"><feGaussianBlur in="SourceGraphic" stdDeviation="3" result="b"/><feTurbulence type="fractalNoise" baseFrequency="0.6" numOctaves="1" seed="26" result="n"/><feColorMatrix in="n" type="matrix" values="0 0 0 0 0 0 0 0 0 0 0 0 0 0 0 1 0 0 0 0"/><feComponentTransfer result="na"><feFuncA type="table" tableValues="0 0 0 0 0 0 0 .001 .004 .017 .046 .083 .128 .2 .28 .382 .528 .637 .742 .821 .89 .931 .964 .987 .997 .999 1 1 1 1 1 1 1"/></feComponentTransfer><feComposite in="b" in2="na" operator="arithmetic" k1="0" k2="60" k3="-60" k4="-0.4" result="m"/><feComposite in="b" in2="m" operator="in" result="c"/><feComponentTransfer in="c"><feFuncA type="linear" slope="1000"/></feComponentTransfer></filter><filter id="nO6" filterUnits="userSpaceOnUse" x="355" y="80" width="1565" height="789" color-interpolation-filters="sRGB"><feGaussianBlur in="SourceGraphic" stdDeviation="4" result="b"/><feTurbulence type="fractalNoise" baseFrequency="0.6" numOctaves="1" seed="27" result="n"/><feColorMatrix in="n" type="matrix" values="0 0 0 0 0 0 0 0 0 0 0 0 0 0 0 1 0 0 0 0"/><feComponentTransfer result="na"><feFuncA type="table" tableValues="0 0 0 0 0 0 0 .001 .004 .017 .046 .083 .128 .2 .28 .382 .528 .637 .742 .821 .89 .931 .964 .987 .997 .999 1 1 1 1 1 1 1"/></feComponentTransfer><feComposite in="b" in2="na" operator="arithmetic" k1="0" k2="60" k3="-60" k4="-0.4" result="m"/><feComposite in="b" in2="m" operator="in" result="c"/><feComponentTransfer in="c"><feFuncA type="linear" slope="1000"/></feComponentTransfer></filter><filter id="nO7" filterUnits="userSpaceOnUse" x="355" y="80" width="1565" height="789" color-interpolation-filters="sRGB"><feGaussianBlur in="SourceGraphic" stdDeviation="5" result="b"/><feTurbulence type="fractalNoise" baseFrequency="0.6" numOctaves="1" seed="28" result="n"/><feColorMatrix in="n" type="matrix" values="0 0 0 0 0 0 0 0 0 0 0 0 0 0 0 1 0 0 0 0"/><feComponentTransfer result="na"><feFuncA type="table" tableValues="0 0 0 0 0 0 0 .001 .004 .017 .046 .083 .128 .2 .28 .382 .528 .637 .742 .821 .89 .931 .964 .987 .997 .999 1 1 1 1 1 1 1"/></feComponentTransfer><feComposite in="b" in2="na" operator="arithmetic" k1="0" k2="60" k3="-60" k4="-0.4" result="m"/><feComposite in="b" in2="m" operator="in" result="c"/><feComponentTransfer in="c"><feFuncA type="linear" slope="1000"/></feComponentTransfer></filter><filter id="nO8" filterUnits="userSpaceOnUse" x="355" y="80" width="1565" height="789" color-interpolation-filters="sRGB"><feGaussianBlur in="SourceGraphic" stdDeviation="6" result="b"/><feTurbulence type="fractalNoise" baseFrequency="0.6" numOctaves="1" seed="29" result="n"/><feColorMatrix in="n" type="matrix" values="0 0 0 0 0 0 0 0 0 0 0 0 0 0 0 1 0 0 0 0"/><feComponentTransfer result="na"><feFuncA type="table" tableValues="0 0 0 0 0 0 0 .001 .004 .017 .046 .083 .128 .2 .28 .382 .528 .637 .742 .821 .89 .931 .964 .987 .997 .999 1 1 1 1 1 1 1"/></feComponentTransfer><feComposite in="b" in2="na" operator="arithmetic" k1="0" k2="60" k3="-60" k4="-0.4" result="m"/><feComposite in="b" in2="m" operator="in" result="c"/><feComponentTransfer in="c"><feFuncA type="linear" slope="1000"/></feComponentTransfer></filter><filter id="nO9" filterUnits="userSpaceOnUse" x="355" y="80" width="1565" height="789" color-interpolation-filters="sRGB"><feGaussianBlur in="SourceGraphic" stdDeviation="8" result="b"/><feTurbulence type="fractalNoise" baseFrequency="0.6" numOctaves="1" seed="30" result="n"/><feColorMatrix in="n" type="matrix" values="0 0 0 0 0 0 0 0 0 0 0 0 0 0 0 1 0 0 0 0"/><feComponentTransfer result="na"><feFuncA type="table" tableValues="0 0 0 0 0 0 0 .001 .004 .017 .046 .083 .128 .2 .28 .382 .528 .637 .742 .821 .89 .931 .964 .987 .997 .999 1 1 1 1 1 1 1"/></feComponentTransfer><feComposite in="b" in2="na" operator="arithmetic" k1="0" k2="60" k3="-60" k4="-0.4" result="m"/><feComposite in="b" in2="m" operator="in" result="c"/><feComponentTransfer in="c"><feFuncA type="linear" slope="1000"/></feComponentTransfer></filter><filter id="nO10" filterUnits="userSpaceOnUse" x="355" y="80" width="1565" height="789" color-interpolation-filters="sRGB"><feGaussianBlur in="SourceGraphic" stdDeviation="10" result="b"/><feTurbulence type="fractalNoise" baseFrequency="0.6" numOctaves="1" seed="31" result="n"/><feColorMatrix in="n" type="matrix" values="0 0 0 0 0 0 0 0 0 0 0 0 0 0 0 1 0 0 0 0"/><feComponentTransfer result="na"><feFuncA type="table" tableValues="0 0 0 0 0 0 0 .001 .004 .017 .046 .083 .128 .2 .28 .382 .528 .637 .742 .821 .89 .931 .964 .987 .997 .999 1 1 1 1 1 1 1"/></feComponentTransfer><feComposite in="b" in2="na" operator="arithmetic" k1="0" k2="60" k3="-60" k4="-0.4" result="m"/><feComposite in="b" in2="m" operator="in" result="c"/><feComponentTransfer in="c"><feFuncA type="linear" slope="1000"/></feComponentTransfer></filter><filter id="nR0" filterUnits="userSpaceOnUse" x="355" y="80" width="1565" height="789" color-interpolation-filters="sRGB"><feGaussianBlur in="SourceGraphic" stdDeviation="0.8" result="b"/><feTurbulence type="fractalNoise" baseFrequency="0.6" numOctaves="1" seed="77" result="n"/><feColorMatrix in="n" type="matrix" values="0 0 0 0 0 0 0 0 0 0 0 0 0 0 0 1 0 0 0 0"/><feComponentTransfer result="na"><feFuncA type="table" tableValues="0 0 0 0 0 0 0 .001 .004 .017 .046 .083 .128 .2 .28 .382 .528 .637 .742 .821 .89 .931 .964 .987 .997 .999 1 1 1 1 1 1 1"/></feComponentTransfer><feComposite in="b" in2="na" operator="arithmetic" k1="0" k2="60" k3="-60" k4="-0.4" result="m"/><feComposite in="b" in2="m" operator="in" result="c"/><feComponentTransfer in="c"><feFuncA type="linear" slope="1000"/></feComponentTransfer></filter><filter id="nR2" filterUnits="userSpaceOnUse" x="355" y="80" width="1565" height="789" color-interpolation-filters="sRGB"><feGaussianBlur in="SourceGraphic" stdDeviation="1.2" result="b"/><feTurbulence type="fractalNoise" baseFrequency="0.6" numOctaves="1" seed="79" result="n"/><feColorMatrix in="n" type="matrix" values="0 0 0 0 0 0 0 0 0 0 0 0 0 0 0 1 0 0 0 0"/><feComponentTransfer result="na"><feFuncA type="table" tableValues="0 0 0 0 0 0 0 .001 .004 .017 .046 .083 .128 .2 .28 .382 .528 .637 .742 .821 .89 .931 .964 .987 .997 .999 1 1 1 1 1 1 1"/></feComponentTransfer><feComposite in="b" in2="na" operator="arithmetic" k1="0" k2="60" k3="-60" k4="-0.4" result="m"/><feComposite in="b" in2="m" operator="in" result="c"/><feComponentTransfer in="c"><feFuncA type="linear" slope="1000"/></feComponentTransfer></filter><filter id="nR3" filterUnits="userSpaceOnUse" x="355" y="80" width="1565" height="789" color-interpolation-filters="sRGB"><feGaussianBlur in="SourceGraphic" stdDeviation="1.5" result="b"/><feTurbulence type="fractalNoise" baseFrequency="0.6" numOctaves="1" seed="80" result="n"/><feColorMatrix in="n" type="matrix" values="0 0 0 0 0 0 0 0 0 0 0 0 0 0 0 1 0 0 0 0"/><feComponentTransfer result="na"><feFuncA type="table" tableValues="0 0 0 0 0 0 0 .001 .004 .017 .046 .083 .128 .2 .28 .382 .528 .637 .742 .821 .89 .931 .964 .987 .997 .999 1 1 1 1 1 1 1"/></feComponentTransfer><feComposite in="b" in2="na" operator="arithmetic" k1="0" k2="60" k3="-60" k4="-0.4" result="m"/><feComposite in="b" in2="m" operator="in" result="c"/><feComponentTransfer in="c"><feFuncA type="linear" slope="1000"/></feComponentTransfer></filter><filter id="nR4" filterUnits="userSpaceOnUse" x="355" y="80" width="1565" height="789" color-interpolation-filters="sRGB"><feGaussianBlur in="SourceGraphic" stdDeviation="2" result="b"/><feTurbulence type="fractalNoise" baseFrequency="0.6" numOctaves="1" seed="81" result="n"/><feColorMatrix in="n" type="matrix" values="0 0 0 0 0 0 0 0 0 0 0 0 0 0 0 1 0 0 0 0"/><feComponentTransfer result="na"><feFuncA type="table" tableValues="0 0 0 0 0 0 0 .001 .004 .017 .046 .083 .128 .2 .28 .382 .528 .637 .742 .821 .89 .931 .964 .987 .997 .999 1 1 1 1 1 1 1"/></feComponentTransfer><feComposite in="b" in2="na" operator="arithmetic" k1="0" k2="60" k3="-60" k4="-0.4" result="m"/><feComposite in="b" in2="m" operator="in" result="c"/><feComponentTransfer in="c"><feFuncA type="linear" slope="1000"/></feComponentTransfer></filter><filter id="nR5" filterUnits="userSpaceOnUse" x="355" y="80" width="1565" height="789" color-interpolation-filters="sRGB"><feGaussianBlur in="SourceGraphic" stdDeviation="3" result="b"/><feTurbulence type="fractalNoise" baseFrequency="0.6" numOctaves="1" seed="82" result="n"/><feColorMatrix in="n" type="matrix" values="0 0 0 0 0 0 0 0 0 0 0 0 0 0 0 1 0 0 0 0"/><feComponentTransfer result="na"><feFuncA type="table" tableValues="0 0 0 0 0 0 0 .001 .004 .017 .046 .083 .128 .2 .28 .382 .528 .637 .742 .821 .89 .931 .964 .987 .997 .999 1 1 1 1 1 1 1"/></feComponentTransfer><feComposite in="b" in2="na" operator="arithmetic" k1="0" k2="60" k3="-60" k4="-0.4" result="m"/><feComposite in="b" in2="m" operator="in" result="c"/><feComponentTransfer in="c"><feFuncA type="linear" slope="1000"/></feComponentTransfer></filter><filter id="nR6" filterUnits="userSpaceOnUse" x="355" y="80" width="1565" height="789" color-interpolation-filters="sRGB"><feGaussianBlur in="SourceGraphic" stdDeviation="4" result="b"/><feTurbulence type="fractalNoise" baseFrequency="0.6" numOctaves="1" seed="83" result="n"/><feColorMatrix in="n" type="matrix" values="0 0 0 0 0 0 0 0 0 0 0 0 0 0 0 1 0 0 0 0"/><feComponentTransfer result="na"><feFuncA type="table" tableValues="0 0 0 0 0 0 0 .001 .004 .017 .046 .083 .128 .2 .28 .382 .528 .637 .742 .821 .89 .931 .964 .987 .997 .999 1 1 1 1 1 1 1"/></feComponentTransfer><feComposite in="b" in2="na" operator="arithmetic" k1="0" k2="60" k3="-60" k4="-0.4" result="m"/><feComposite in="b" in2="m" operator="in" result="c"/><feComponentTransfer in="c"><feFuncA type="linear" slope="1000"/></feComponentTransfer></filter><filter id="nR7" filterUnits="userSpaceOnUse" x="355" y="80" width="1565" height="789" color-interpolation-filters="sRGB"><feGaussianBlur in="SourceGraphic" stdDeviation="5" result="b"/><feTurbulence type="fractalNoise" baseFrequency="0.6" numOctaves="1" seed="84" result="n"/><feColorMatrix in="n" type="matrix" values="0 0 0 0 0 0 0 0 0 0 0 0 0 0 0 1 0 0 0 0"/><feComponentTransfer result="na"><feFuncA type="table" tableValues="0 0 0 0 0 0 0 .001 .004 .017 .046 .083 .128 .2 .28 .382 .528 .637 .742 .821 .89 .931 .964 .987 .997 .999 1 1 1 1 1 1 1"/></feComponentTransfer><feComposite in="b" in2="na" operator="arithmetic" k1="0" k2="60" k3="-60" k4="-0.4" result="m"/><feComposite in="b" in2="m" operator="in" result="c"/><feComponentTransfer in="c"><feFuncA type="linear" slope="1000"/></feComponentTransfer></filter><filter id="nR8" filterUnits="userSpaceOnUse" x="355" y="80" width="1565" height="789" color-interpolation-filters="sRGB"><feGaussianBlur in="SourceGraphic" stdDeviation="6" result="b"/><feTurbulence type="fractalNoise" baseFrequency="0.6" numOctaves="1" seed="85" result="n"/><feColorMatrix in="n" type="matrix" values="0 0 0 0 0 0 0 0 0 0 0 0 0 0 0 1 0 0 0 0"/><feComponentTransfer result="na"><feFuncA type="table" tableValues="0 0 0 0 0 0 0 .001 .004 .017 .046 .083 .128 .2 .28 .382 .528 .637 .742 .821 .89 .931 .964 .987 .997 .999 1 1 1 1 1 1 1"/></feComponentTransfer><feComposite in="b" in2="na" operator="arithmetic" k1="0" k2="60" k3="-60" k4="-0.4" result="m"/><feComposite in="b" in2="m" operator="in" result="c"/><feComponentTransfer in="c"><feFuncA type="linear" slope="1000"/></feComponentTransfer></filter><filter id="nR9" filterUnits="userSpaceOnUse" x="355" y="80" width="1565" height="789" color-interpolation-filters="sRGB"><feGaussianBlur in="SourceGraphic" stdDeviation="8" result="b"/><feTurbulence type="fractalNoise" baseFrequency="0.6" numOctaves="1" seed="86" result="n"/><feColorMatrix in="n" type="matrix" values="0 0 0 0 0 0 0 0 0 0 0 0 0 0 0 1 0 0 0 0"/><feComponentTransfer result="na"><feFuncA type="table" tableValues="0 0 0 0 0 0 0 .001 .004 .017 .046 .083 .128 .2 .28 .382 .528 .637 .742 .821 .89 .931 .964 .987 .997 .999 1 1 1 1 1 1 1"/></feComponentTransfer><feComposite in="b" in2="na" operator="arithmetic" k1="0" k2="60" k3="-60" k4="-0.4" result="m"/><feComposite in="b" in2="m" operator="in" result="c"/><feComponentTransfer in="c"><feFuncA type="linear" slope="1000"/></feComponentTransfer></filter><filter id="nR10" filterUnits="userSpaceOnUse" x="355" y="80" width="1565" height="789" color-interpolation-filters="sRGB"><feGaussianBlur in="SourceGraphic" stdDeviation="10" result="b"/><feTurbulence type="fractalNoise" baseFrequency="0.6" numOctaves="1" seed="87" result="n"/><feColorMatrix in="n" type="matrix" values="0 0 0 0 0 0 0 0 0 0 0 0 0 0 0 1 0 0 0 0"/><feComponentTransfer result="na"><feFuncA type="table" tableValues="0 0 0 0 0 0 0 .001 .004 .017 .046 .083 .128 .2 .28 .382 .528 .637 .742 .821 .89 .931 .964 .987 .997 .999 1 1 1 1 1 1 1"/></feComponentTransfer><feComposite in="b" in2="na" operator="arithmetic" k1="0" k2="60" k3="-60" k4="-0.4" result="m"/><feComposite in="b" in2="m" operator="in" result="c"/><feComponentTransfer in="c"><feFuncA type="linear" slope="1000"/></feComponentTransfer></filter><filter id="nY0" filterUnits="userSpaceOnUse" x="355" y="80" width="1565" height="789" color-interpolation-filters="sRGB"><feGaussianBlur in="SourceGraphic" stdDeviation="0.8" result="b"/><feTurbulence type="fractalNoise" baseFrequency="0.6" numOctaves="1" seed="49" result="n"/><feColorMatrix in="n" type="matrix" values="0 0 0 0 0 0 0 0 0 0 0 0 0 0 0 1 0 0 0 0"/><feComponentTransfer result="na"><feFuncA type="table" tableValues="0 0 0 0 0 0 0 .001 .004 .017 .046 .083 .128 .2 .28 .382 .528 .637 .742 .821 .89 .931 .964 .987 .997 .999 1 1 1 1 1 1 1"/></feComponentTransfer><feComposite in="b" in2="na" operator="arithmetic" k1="0" k2="60" k3="-60" k4="-0.4" result="m"/><feComposite in="b" in2="m" operator="in" result="c"/><feComponentTransfer in="c"><feFuncA type="linear" slope="1000"/></feComponentTransfer></filter><filter id="nY2" filterUnits="userSpaceOnUse" x="355" y="80" width="1565" height="789" color-interpolation-filters="sRGB"><feGaussianBlur in="SourceGraphic" stdDeviation="1.2" result="b"/><feTurbulence type="fractalNoise" baseFrequency="0.6" numOctaves="1" seed="51" result="n"/><feColorMatrix in="n" type="matrix" values="0 0 0 0 0 0 0 0 0 0 0 0 0 0 0 1 0 0 0 0"/><feComponentTransfer result="na"><feFuncA type="table" tableValues="0 0 0 0 0 0 0 .001 .004 .017 .046 .083 .128 .2 .28 .382 .528 .637 .742 .821 .89 .931 .964 .987 .997 .999 1 1 1 1 1 1 1"/></feComponentTransfer><feComposite in="b" in2="na" operator="arithmetic" k1="0" k2="60" k3="-60" k4="-0.4" result="m"/><feComposite in="b" in2="m" operator="in" result="c"/><feComponentTransfer in="c"><feFuncA type="linear" slope="1000"/></feComponentTransfer></filter><filter id="nY3" filterUnits="userSpaceOnUse" x="355" y="80" width="1565" height="789" color-interpolation-filters="sRGB"><feGaussianBlur in="SourceGraphic" stdDeviation="1.5" result="b"/><feTurbulence type="fractalNoise" baseFrequency="0.6" numOctaves="1" seed="52" result="n"/><feColorMatrix in="n" type="matrix" values="0 0 0 0 0 0 0 0 0 0 0 0 0 0 0 1 0 0 0 0"/><feComponentTransfer result="na"><feFuncA type="table" tableValues="0 0 0 0 0 0 0 .001 .004 .017 .046 .083 .128 .2 .28 .382 .528 .637 .742 .821 .89 .931 .964 .987 .997 .999 1 1 1 1 1 1 1"/></feComponentTransfer><feComposite in="b" in2="na" operator="arithmetic" k1="0" k2="60" k3="-60" k4="-0.4" result="m"/><feComposite in="b" in2="m" operator="in" result="c"/><feComponentTransfer in="c"><feFuncA type="linear" slope="1000"/></feComponentTransfer></filter><filter id="nY4" filterUnits="userSpaceOnUse" x="355" y="80" width="1565" height="789" color-interpolation-filters="sRGB"><feGaussianBlur in="SourceGraphic" stdDeviation="2" result="b"/><feTurbulence type="fractalNoise" baseFrequency="0.6" numOctaves="1" seed="53" result="n"/><feColorMatrix in="n" type="matrix" values="0 0 0 0 0 0 0 0 0 0 0 0 0 0 0 1 0 0 0 0"/><feComponentTransfer result="na"><feFuncA type="table" tableValues="0 0 0 0 0 0 0 .001 .004 .017 .046 .083 .128 .2 .28 .382 .528 .637 .742 .821 .89 .931 .964 .987 .997 .999 1 1 1 1 1 1 1"/></feComponentTransfer><feComposite in="b" in2="na" operator="arithmetic" k1="0" k2="60" k3="-60" k4="-0.4" result="m"/><feComposite in="b" in2="m" operator="in" result="c"/><feComponentTransfer in="c"><feFuncA type="linear" slope="1000"/></feComponentTransfer></filter><filter id="nY5" filterUnits="userSpaceOnUse" x="355" y="80" width="1565" height="789" color-interpolation-filters="sRGB"><feGaussianBlur in="SourceGraphic" stdDeviation="3" result="b"/><feTurbulence type="fractalNoise" baseFrequency="0.6" numOctaves="1" seed="54" result="n"/><feColorMatrix in="n" type="matrix" values="0 0 0 0 0 0 0 0 0 0 0 0 0 0 0 1 0 0 0 0"/><feComponentTransfer result="na"><feFuncA type="table" tableValues="0 0 0 0 0 0 0 .001 .004 .017 .046 .083 .128 .2 .28 .382 .528 .637 .742 .821 .89 .931 .964 .987 .997 .999 1 1 1 1 1 1 1"/></feComponentTransfer><feComposite in="b" in2="na" operator="arithmetic" k1="0" k2="60" k3="-60" k4="-0.4" result="m"/><feComposite in="b" in2="m" operator="in" result="c"/><feComponentTransfer in="c"><feFuncA type="linear" slope="1000"/></feComponentTransfer></filter><filter id="nY6" filterUnits="userSpaceOnUse" x="355" y="80" width="1565" height="789" color-interpolation-filters="sRGB"><feGaussianBlur in="SourceGraphic" stdDeviation="4" result="b"/><feTurbulence type="fractalNoise" baseFrequency="0.6" numOctaves="1" seed="55" result="n"/><feColorMatrix in="n" type="matrix" values="0 0 0 0 0 0 0 0 0 0 0 0 0 0 0 1 0 0 0 0"/><feComponentTransfer result="na"><feFuncA type="table" tableValues="0 0 0 0 0 0 0 .001 .004 .017 .046 .083 .128 .2 .28 .382 .528 .637 .742 .821 .89 .931 .964 .987 .997 .999 1 1 1 1 1 1 1"/></feComponentTransfer><feComposite in="b" in2="na" operator="arithmetic" k1="0" k2="60" k3="-60" k4="-0.4" result="m"/><feComposite in="b" in2="m" operator="in" result="c"/><feComponentTransfer in="c"><feFuncA type="linear" slope="1000"/></feComponentTransfer></filter><filter id="nY7" filterUnits="userSpaceOnUse" x="355" y="80" width="1565" height="789" color-interpolation-filters="sRGB"><feGaussianBlur in="SourceGraphic" stdDeviation="5" result="b"/><feTurbulence type="fractalNoise" baseFrequency="0.6" numOctaves="1" seed="56" result="n"/><feColorMatrix in="n" type="matrix" values="0 0 0 0 0 0 0 0 0 0 0 0 0 0 0 1 0 0 0 0"/><feComponentTransfer result="na"><feFuncA type="table" tableValues="0 0 0 0 0 0 0 .001 .004 .017 .046 .083 .128 .2 .28 .382 .528 .637 .742 .821 .89 .931 .964 .987 .997 .999 1 1 1 1 1 1 1"/></feComponentTransfer><feComposite in="b" in2="na" operator="arithmetic" k1="0" k2="60" k3="-60" k4="-0.4" result="m"/><feComposite in="b" in2="m" operator="in" result="c"/><feComponentTransfer in="c"><feFuncA type="linear" slope="1000"/></feComponentTransfer></filter><filter id="nY8" filterUnits="userSpaceOnUse" x="355" y="80" width="1565" height="789" color-interpolation-filters="sRGB"><feGaussianBlur in="SourceGraphic" stdDeviation="6" result="b"/><feTurbulence type="fractalNoise" baseFrequency="0.6" numOctaves="1" seed="57" result="n"/><feColorMatrix in="n" type="matrix" values="0 0 0 0 0 0 0 0 0 0 0 0 0 0 0 1 0 0 0 0"/><feComponentTransfer result="na"><feFuncA type="table" tableValues="0 0 0 0 0 0 0 .001 .004 .017 .046 .083 .128 .2 .28 .382 .528 .637 .742 .821 .89 .931 .964 .987 .997 .999 1 1 1 1 1 1 1"/></feComponentTransfer><feComposite in="b" in2="na" operator="arithmetic" k1="0" k2="60" k3="-60" k4="-0.4" result="m"/><feComposite in="b" in2="m" operator="in" result="c"/><feComponentTransfer in="c"><feFuncA type="linear" slope="1000"/></feComponentTransfer></filter><filter id="nY9" filterUnits="userSpaceOnUse" x="355" y="80" width="1565" height="789" color-interpolation-filters="sRGB"><feGaussianBlur in="SourceGraphic" stdDeviation="8" result="b"/><feTurbulence type="fractalNoise" baseFrequency="0.6" numOctaves="1" seed="58" result="n"/><feColorMatrix in="n" type="matrix" values="0 0 0 0 0 0 0 0 0 0 0 0 0 0 0 1 0 0 0 0"/><feComponentTransfer result="na"><feFuncA type="table" tableValues="0 0 0 0 0 0 0 .001 .004 .017 .046 .083 .128 .2 .28 .382 .528 .637 .742 .821 .89 .931 .964 .987 .997 .999 1 1 1 1 1 1 1"/></feComponentTransfer><feComposite in="b" in2="na" operator="arithmetic" k1="0" k2="60" k3="-60" k4="-0.4" result="m"/><feComposite in="b" in2="m" operator="in" result="c"/><feComponentTransfer in="c"><feFuncA type="linear" slope="1000"/></feComponentTransfer></filter><filter id="nY10" filterUnits="userSpaceOnUse" x="355" y="80" width="1565" height="789" color-interpolation-filters="sRGB"><feGaussianBlur in="SourceGraphic" stdDeviation="10" result="b"/><feTurbulence type="fractalNoise" baseFrequency="0.6" numOctaves="1" seed="59" result="n"/><feColorMatrix in="n" type="matrix" values="0 0 0 0 0 0 0 0 0 0 0 0 0 0 0 1 0 0 0 0"/><feComponentTransfer result="na"><feFuncA type="table" tableValues="0 0 0 0 0 0 0 .001 .004 .017 .046 .083 .128 .2 .28 .382 .528 .637 .742 .821 .89 .931 .964 .987 .997 .999 1 1 1 1 1 1 1"/></feComponentTransfer><feComposite in="b" in2="na" operator="arithmetic" k1="0" k2="60" k3="-60" k4="-0.4" result="m"/><feComposite in="b" in2="m" operator="in" result="c"/><feComponentTransfer in="c"><feFuncA type="linear" slope="1000"/></feComponentTransfer></filter><filter id="nL0" filterUnits="userSpaceOnUse" x="355" y="80" width="1565" height="789" color-interpolation-filters="sRGB"><feGaussianBlur in="SourceGraphic" stdDeviation="0.8" result="b"/><feTurbulence type="fractalNoise" baseFrequency="0.6" numOctaves="1" seed="133" result="n"/><feColorMatrix in="n" type="matrix" values="0 0 0 0 0 0 0 0 0 0 0 0 0 0 0 1 0 0 0 0"/><feComponentTransfer result="na"><feFuncA type="table" tableValues="0 0 0 0 0 0 0 .001 .004 .017 .046 .083 .128 .2 .28 .382 .528 .637 .742 .821 .89 .931 .964 .987 .997 .999 1 1 1 1 1 1 1"/></feComponentTransfer><feComposite in="b" in2="na" operator="arithmetic" k1="0" k2="60" k3="-60" k4="-0.4" result="m"/><feComposite in="b" in2="m" operator="in" result="c"/><feComponentTransfer in="c"><feFuncA type="linear" slope="1000"/></feComponentTransfer></filter><filter id="nL2" filterUnits="userSpaceOnUse" x="355" y="80" width="1565" height="789" color-interpolation-filters="sRGB"><feGaussianBlur in="SourceGraphic" stdDeviation="1.2" result="b"/><feTurbulence type="fractalNoise" baseFrequency="0.6" numOctaves="1" seed="135" result="n"/><feColorMatrix in="n" type="matrix" values="0 0 0 0 0 0 0 0 0 0 0 0 0 0 0 1 0 0 0 0"/><feComponentTransfer result="na"><feFuncA type="table" tableValues="0 0 0 0 0 0 0 .001 .004 .017 .046 .083 .128 .2 .28 .382 .528 .637 .742 .821 .89 .931 .964 .987 .997 .999 1 1 1 1 1 1 1"/></feComponentTransfer><feComposite in="b" in2="na" operator="arithmetic" k1="0" k2="60" k3="-60" k4="-0.4" result="m"/><feComposite in="b" in2="m" operator="in" result="c"/><feComponentTransfer in="c"><feFuncA type="linear" slope="1000"/></feComponentTransfer></filter><filter id="nL3" filterUnits="userSpaceOnUse" x="355" y="80" width="1565" height="789" color-interpolation-filters="sRGB"><feGaussianBlur in="SourceGraphic" stdDeviation="1.5" result="b"/><feTurbulence type="fractalNoise" baseFrequency="0.6" numOctaves="1" seed="136" result="n"/><feColorMatrix in="n" type="matrix" values="0 0 0 0 0 0 0 0 0 0 0 0 0 0 0 1 0 0 0 0"/><feComponentTransfer result="na"><feFuncA type="table" tableValues="0 0 0 0 0 0 0 .001 .004 .017 .046 .083 .128 .2 .28 .382 .528 .637 .742 .821 .89 .931 .964 .987 .997 .999 1 1 1 1 1 1 1"/></feComponentTransfer><feComposite in="b" in2="na" operator="arithmetic" k1="0" k2="60" k3="-60" k4="-0.4" result="m"/><feComposite in="b" in2="m" operator="in" result="c"/><feComponentTransfer in="c"><feFuncA type="linear" slope="1000"/></feComponentTransfer></filter><filter id="nL4" filterUnits="userSpaceOnUse" x="355" y="80" width="1565" height="789" color-interpolation-filters="sRGB"><feGaussianBlur in="SourceGraphic" stdDeviation="2" result="b"/><feTurbulence type="fractalNoise" baseFrequency="0.6" numOctaves="1" seed="137" result="n"/><feColorMatrix in="n" type="matrix" values="0 0 0 0 0 0 0 0 0 0 0 0 0 0 0 1 0 0 0 0"/><feComponentTransfer result="na"><feFuncA type="table" tableValues="0 0 0 0 0 0 0 .001 .004 .017 .046 .083 .128 .2 .28 .382 .528 .637 .742 .821 .89 .931 .964 .987 .997 .999 1 1 1 1 1 1 1"/></feComponentTransfer><feComposite in="b" in2="na" operator="arithmetic" k1="0" k2="60" k3="-60" k4="-0.4" result="m"/><feComposite in="b" in2="m" operator="in" result="c"/><feComponentTransfer in="c"><feFuncA type="linear" slope="1000"/></feComponentTransfer></filter><filter id="nL5" filterUnits="userSpaceOnUse" x="355" y="80" width="1565" height="789" color-interpolation-filters="sRGB"><feGaussianBlur in="SourceGraphic" stdDeviation="3" result="b"/><feTurbulence type="fractalNoise" baseFrequency="0.6" numOctaves="1" seed="138" result="n"/><feColorMatrix in="n" type="matrix" values="0 0 0 0 0 0 0 0 0 0 0 0 0 0 0 1 0 0 0 0"/><feComponentTransfer result="na"><feFuncA type="table" tableValues="0 0 0 0 0 0 0 .001 .004 .017 .046 .083 .128 .2 .28 .382 .528 .637 .742 .821 .89 .931 .964 .987 .997 .999 1 1 1 1 1 1 1"/></feComponentTransfer><feComposite in="b" in2="na" operator="arithmetic" k1="0" k2="60" k3="-60" k4="-0.4" result="m"/><feComposite in="b" in2="m" operator="in" result="c"/><feComponentTransfer in="c"><feFuncA type="linear" slope="1000"/></feComponentTransfer></filter><filter id="nL6" filterUnits="userSpaceOnUse" x="355" y="80" width="1565" height="789" color-interpolation-filters="sRGB"><feGaussianBlur in="SourceGraphic" stdDeviation="4" result="b"/><feTurbulence type="fractalNoise" baseFrequency="0.6" numOctaves="1" seed="139" result="n"/><feColorMatrix in="n" type="matrix" values="0 0 0 0 0 0 0 0 0 0 0 0 0 0 0 1 0 0 0 0"/><feComponentTransfer result="na"><feFuncA type="table" tableValues="0 0 0 0 0 0 0 .001 .004 .017 .046 .083 .128 .2 .28 .382 .528 .637 .742 .821 .89 .931 .964 .987 .997 .999 1 1 1 1 1 1 1"/></feComponentTransfer><feComposite in="b" in2="na" operator="arithmetic" k1="0" k2="60" k3="-60" k4="-0.4" result="m"/><feComposite in="b" in2="m" operator="in" result="c"/><feComponentTransfer in="c"><feFuncA type="linear" slope="1000"/></feComponentTransfer></filter><filter id="nL8" filterUnits="userSpaceOnUse" x="355" y="80" width="1565" height="789" color-interpolation-filters="sRGB"><feGaussianBlur in="SourceGraphic" stdDeviation="6" result="b"/><feTurbulence type="fractalNoise" baseFrequency="0.6" numOctaves="1" seed="141" result="n"/><feColorMatrix in="n" type="matrix" values="0 0 0 0 0 0 0 0 0 0 0 0 0 0 0 1 0 0 0 0"/><feComponentTransfer result="na"><feFuncA type="table" tableValues="0 0 0 0 0 0 0 .001 .004 .017 .046 .083 .128 .2 .28 .382 .528 .637 .742 .821 .89 .931 .964 .987 .997 .999 1 1 1 1 1 1 1"/></feComponentTransfer><feComposite in="b" in2="na" operator="arithmetic" k1="0" k2="60" k3="-60" k4="-0.4" result="m"/><feComposite in="b" in2="m" operator="in" result="c"/><feComponentTransfer in="c"><feFuncA type="linear" slope="1000"/></feComponentTransfer></filter><filter id="nL9" filterUnits="userSpaceOnUse" x="355" y="80" width="1565" height="789" color-interpolation-filters="sRGB"><feGaussianBlur in="SourceGraphic" stdDeviation="8" result="b"/><feTurbulence type="fractalNoise" baseFrequency="0.6" numOctaves="1" seed="142" result="n"/><feColorMatrix in="n" type="matrix" values="0 0 0 0 0 0 0 0 0 0 0 0 0 0 0 1 0 0 0 0"/><feComponentTransfer result="na"><feFuncA type="table" tableValues="0 0 0 0 0 0 0 .001 .004 .017 .046 .083 .128 .2 .28 .382 .528 .637 .742 .821 .89 .931 .964 .987 .997 .999 1 1 1 1 1 1 1"/></feComponentTransfer><feComposite in="b" in2="na" operator="arithmetic" k1="0" k2="60" k3="-60" k4="-0.4" result="m"/><feComposite in="b" in2="m" operator="in" result="c"/><feComponentTransfer in="c"><feFuncA type="linear" slope="1000"/></feComponentTransfer></filter><filter id="nL10" filterUnits="userSpaceOnUse" x="355" y="80" width="1565" height="789" color-interpolation-filters="sRGB"><feGaussianBlur in="SourceGraphic" stdDeviation="10" result="b"/><feTurbulence type="fractalNoise" baseFrequency="0.6" numOctaves="1" seed="143" result="n"/><feColorMatrix in="n" type="matrix" values="0 0 0 0 0 0 0 0 0 0 0 0 0 0 0 1 0 0 0 0"/><feComponentTransfer result="na"><feFuncA type="table" tableValues="0 0 0 0 0 0 0 .001 .004 .017 .046 .083 .128 .2 .28 .382 .528 .637 .742 .821 .89 .931 .964 .987 .997 .999 1 1 1 1 1 1 1"/></feComponentTransfer><feComposite in="b" in2="na" operator="arithmetic" k1="0" k2="60" k3="-60" k4="-0.4" result="m"/><feComposite in="b" in2="m" operator="in" result="c"/><feComponentTransfer in="c"><feFuncA type="linear" slope="1000"/></feComponentTransfer></filter><filter id="nG2" filterUnits="userSpaceOnUse" x="355" y="80" width="1565" height="789" color-interpolation-filters="sRGB"><feGaussianBlur in="SourceGraphic" stdDeviation="1.2" result="b"/><feTurbulence type="fractalNoise" baseFrequency="0.6" numOctaves="1" seed="163" result="n"/><feColorMatrix in="n" type="matrix" values="0 0 0 0 0 0 0 0 0 0 0 0 0 0 0 1 0 0 0 0"/><feComponentTransfer result="na"><feFuncA type="table" tableValues="0 0 0 0 0 0 0 .001 .004 .017 .046 .083 .128 .2 .28 .382 .528 .637 .742 .821 .89 .931 .964 .987 .997 .999 1 1 1 1 1 1 1"/></feComponentTransfer><feComposite in="b" in2="na" operator="arithmetic" k1="0" k2="60" k3="-60" k4="-0.4" result="m"/><feComposite in="b" in2="m" operator="in" result="c"/><feComponentTransfer in="c"><feFuncA type="linear" slope="1000"/></feComponentTransfer></filter><filter id="nG3" filterUnits="userSpaceOnUse" x="355" y="80" width="1565" height="789" color-interpolation-filters="sRGB"><feGaussianBlur in="SourceGraphic" stdDeviation="1.5" result="b"/><feTurbulence type="fractalNoise" baseFrequency="0.6" numOctaves="1" seed="164" result="n"/><feColorMatrix in="n" type="matrix" values="0 0 0 0 0 0 0 0 0 0 0 0 0 0 0 1 0 0 0 0"/><feComponentTransfer result="na"><feFuncA type="table" tableValues="0 0 0 0 0 0 0 .001 .004 .017 .046 .083 .128 .2 .28 .382 .528 .637 .742 .821 .89 .931 .964 .987 .997 .999 1 1 1 1 1 1 1"/></feComponentTransfer><feComposite in="b" in2="na" operator="arithmetic" k1="0" k2="60" k3="-60" k4="-0.4" result="m"/><feComposite in="b" in2="m" operator="in" result="c"/><feComponentTransfer in="c"><feFuncA type="linear" slope="1000"/></feComponentTransfer></filter><filter id="nG4" filterUnits="userSpaceOnUse" x="355" y="80" width="1565" height="789" color-interpolation-filters="sRGB"><feGaussianBlur in="SourceGraphic" stdDeviation="2" result="b"/><feTurbulence type="fractalNoise" baseFrequency="0.6" numOctaves="1" seed="165" result="n"/><feColorMatrix in="n" type="matrix" values="0 0 0 0 0 0 0 0 0 0 0 0 0 0 0 1 0 0 0 0"/><feComponentTransfer result="na"><feFuncA type="table" tableValues="0 0 0 0 0 0 0 .001 .004 .017 .046 .083 .128 .2 .28 .382 .528 .637 .742 .821 .89 .931 .964 .987 .997 .999 1 1 1 1 1 1 1"/></feComponentTransfer><feComposite in="b" in2="na" operator="arithmetic" k1="0" k2="60" k3="-60" k4="-0.4" result="m"/><feComposite in="b" in2="m" operator="in" result="c"/><feComponentTransfer in="c"><feFuncA type="linear" slope="1000"/></feComponentTransfer></filter><filter id="nG6" filterUnits="userSpaceOnUse" x="355" y="80" width="1565" height="789" color-interpolation-filters="sRGB"><feGaussianBlur in="SourceGraphic" stdDeviation="4" result="b"/><feTurbulence type="fractalNoise" baseFrequency="0.6" numOctaves="1" seed="167" result="n"/><feColorMatrix in="n" type="matrix" values="0 0 0 0 0 0 0 0 0 0 0 0 0 0 0 1 0 0 0 0"/><feComponentTransfer result="na"><feFuncA type="table" tableValues="0 0 0 0 0 0 0 .001 .004 .017 .046 .083 .128 .2 .28 .382 .528 .637 .742 .821 .89 .931 .964 .987 .997 .999 1 1 1 1 1 1 1"/></feComponentTransfer><feComposite in="b" in2="na" operator="arithmetic" k1="0" k2="60" k3="-60" k4="-0.4" result="m"/><feComposite in="b" in2="m" operator="in" result="c"/><feComponentTransfer in="c"><feFuncA type="linear" slope="1000"/></feComponentTransfer></filter><filter id="nK1" filterUnits="userSpaceOnUse" x="355" y="80" width="1565" height="789" color-interpolation-filters="sRGB"><feGaussianBlur in="SourceGraphic" stdDeviation="1" result="b"/><feTurbulence type="fractalNoise" baseFrequency="0.6" numOctaves="1" seed="204" result="n"/><feColorMatrix in="n" type="matrix" values="0 0 0 0 0 0 0 0 0 0 0 0 0 0 0 1 0 0 0 0"/><feComponentTransfer result="na"><feFuncA type="table" tableValues="0 0 0 0 0 0 0 .001 .004 .017 .046 .083 .128 .2 .28 .382 .528 .637 .742 .821 .89 .931 .964 .987 .997 .999 1 1 1 1 1 1 1"/></feComponentTransfer><feComposite in="b" in2="na" operator="arithmetic" k1="0" k2="60" k3="-60" k4="-0.4" result="m"/><feComposite in="b" in2="m" operator="in" result="c"/><feComponentTransfer in="c"><feFuncA type="linear" slope="1000"/></feComponentTransfer></filter><filter id="nK3" filterUnits="userSpaceOnUse" x="355" y="80" width="1565" height="789" color-interpolation-filters="sRGB"><feGaussianBlur in="SourceGraphic" stdDeviation="1.5" result="b"/><feTurbulence type="fractalNoise" baseFrequency="0.6" numOctaves="1" seed="206" result="n"/><feColorMatrix in="n" type="matrix" values="0 0 0 0 0 0 0 0 0 0 0 0 0 0 0 1 0 0 0 0"/><feComponentTransfer result="na"><feFuncA type="table" tableValues="0 0 0 0 0 0 0 .001 .004 .017 .046 .083 .128 .2 .28 .382 .528 .637 .742 .821 .89 .931 .964 .987 .997 .999 1 1 1 1 1 1 1"/></feComponentTransfer><feComposite in="b" in2="na" operator="arithmetic" k1="0" k2="60" k3="-60" k4="-0.4" result="m"/><feComposite in="b" in2="m" operator="in" result="c"/><feComponentTransfer in="c"><feFuncA type="linear" slope="1000"/></feComponentTransfer></filter><filter id="nK4" filterUnits="userSpaceOnUse" x="355" y="80" width="1565" height="789" color-interpolation-filters="sRGB"><feGaussianBlur in="SourceGraphic" stdDeviation="2" result="b"/><feTurbulence type="fractalNoise" baseFrequency="0.6" numOctaves="1" seed="207" result="n"/><feColorMatrix in="n" type="matrix" values="0 0 0 0 0 0 0 0 0 0 0 0 0 0 0 1 0 0 0 0"/><feComponentTransfer result="na"><feFuncA type="table" tableValues="0 0 0 0 0 0 0 .001 .004 .017 .046 .083 .128 .2 .28 .382 .528 .637 .742 .821 .89 .931 .964 .987 .997 .999 1 1 1 1 1 1 1"/></feComponentTransfer><feComposite in="b" in2="na" operator="arithmetic" k1="0" k2="60" k3="-60" k4="-0.4" result="m"/><feComposite in="b" in2="m" operator="in" result="c"/><feComponentTransfer in="c"><feFuncA type="linear" slope="1000"/></feComponentTransfer></filter><filter id="nK5" filterUnits="userSpaceOnUse" x="355" y="80" width="1565" height="789" color-interpolation-filters="sRGB"><feGaussianBlur in="SourceGraphic" stdDeviation="3" result="b"/><feTurbulence type="fractalNoise" baseFrequency="0.6" numOctaves="1" seed="208" result="n"/><feColorMatrix in="n" type="matrix" values="0 0 0 0 0 0 0 0 0 0 0 0 0 0 0 1 0 0 0 0"/><feComponentTransfer result="na"><feFuncA type="table" tableValues="0 0 0 0 0 0 0 .001 .004 .017 .046 .083 .128 .2 .28 .382 .528 .637 .742 .821 .89 .931 .964 .987 .997 .999 1 1 1 1 1 1 1"/></feComponentTransfer><feComposite in="b" in2="na" operator="arithmetic" k1="0" k2="60" k3="-60" k4="-0.4" result="m"/><feComposite in="b" in2="m" operator="in" result="c"/><feComponentTransfer in="c"><feFuncA type="linear" slope="1000"/></feComponentTransfer></filter></defs><g filter="url(#nO0)" fill="#ff9a00" fill-rule="evenodd"><path d="M850 484L986 438L990 445L853 492Z" fill-opacity="0.718"/><path d="M984 438L991 437L1011 489L1004 494Z" fill-opacity="0.718"/><path d="M927 510L1007 487L1010 495L930 518Z" fill-opacity="0.718"/><path d="M906 474L915 472L958 592L949 596Z" fill-opacity="0.718"/></g><g filter="url(#nO2)" fill="#ff9a00" fill-rule="evenodd"><path d="M892 478L986 445L1003 488L930 509Z" fill-opacity="0.067"/><path d="M1086 392L1105 395L1127 424L1121 427L1089 400Z" fill-opacity="0.231"/><path d="M1048 405L1078 405L1075 419L1065 419Z" fill-opacity="0.547"/><path d="M1081 432L1113 457L1119 470L1105 470L1081 443Z" fill-opacity="0.234"/><path d="M1382 330L1404 335L1399 346L1388 344Z" fill-opacity="0.234"/><path d="M1435 301L1433 300L1427 294L1421 286L1414 277L1407 268L1404 262L1403 259L1405 260L1411 266L1417 274L1424 283L1431 292L1434 298Z" fill-opacity="0.200"/><path d="M1387 301L1385 301L1382 299L1379 295L1375 290L1372 286L1370 283L1370 281L1372 281L1375 283L1378 287L1382 292L1385 296L1387 299Z" fill-opacity="0.200"/><path d="M1352 296L1351 296L1348 294L1345 291L1342 288L1339 285L1338 282L1338 281L1339 281L1342 283L1345 286L1348 289L1351 292L1352 295Z" fill-opacity="0.200"/><path d="M1400 347L1398 346L1394 342L1390 336L1386 328L1383 321L1381 316L1381 314L1383 315L1387 319L1391 325L1395 333L1398 340L1400 345Z" fill-opacity="0.196"/><path d="M1321 316L1321 318L1320 319L1319 320L1317 321L1315 321L1313 321L1311 320L1310 319L1309 318L1309 316L1309 314L1310 313L1311 312L1313 311L1315 311L1317 311L1319 312L1320 313L1321 314Z" fill-opacity="0.200"/><path d="M1290 444L1287 442L1282 434L1275 422L1268 409L1262 397L1258 389L1258 385L1261 387L1266 395L1273 407L1280 420L1286 432L1290 440Z" fill-opacity="0.141"/><path d="M1200 300L1198 300L1195 299L1191 296L1186 293L1183 289L1180 287L1180 285L1182 285L1185 286L1189 289L1194 292L1197 296L1200 298Z" fill-opacity="0.143"/><path d="M1225 268L1224 268L1222 265L1219 262L1217 258L1216 254L1215 251L1215 250L1216 250L1218 253L1221 256L1223 260L1224 264L1225 267Z" fill-opacity="0.143"/></g><g filter="url(#nO3)" fill="#ff9a00" fill-rule="evenodd"><path d="M748 441L770 424L800 417L830 421L846 432L850 468L892 475L920 468L946 462L958 506L954 595L927 598L919 637L895 670L869 698L846 729L815 706L785 675L754 621L730 575L728 540L733 514L741 470Z" fill-opacity="0.956"/><path d="M960 684L956 688L943 694L923 701L902 708L882 714L868 716L862 716L866 712L879 706L899 699L920 692L940 686L954 684Z" fill-opacity="0.355"/><path d="M1018 650L1016 654L1009 660L998 667L985 675L973 681L964 684L960 684L962 680L969 674L980 667L993 659L1005 653L1014 650Z" fill-opacity="0.310"/><path d="M1050 634L1049 636L1045 640L1038 643L1031 647L1024 649L1018 649L1016 648L1017 646L1021 642L1028 639L1035 635L1042 633L1048 633Z" fill-opacity="0.167"/><path d="M985 560L985 563L983 569L980 577L975 586L971 594L967 599L965 600L965 597L967 591L970 583L975 574L979 566L983 561Z" fill-opacity="0.310"/></g><g filter="url(#nO4)" fill="#ff9a00" fill-rule="evenodd"><path d="M640 640L690 600L735 570L752 600L715 630L700 650L675 670Z" fill-opacity="0.574"/><path d="M645 612L672 605L686 615L690 645L682 662L660 662L648 648Z" fill-opacity="0.429"/><path d="M1140 360L1156 365L1186 397L1183 432L1167 432L1151 411L1135 395Z" fill-opacity="0.344"/><path d="M1016 422L1038 422L1040 451L1086 465L1081 484L1054 478L1022 451Z" fill-opacity="0.310"/><path d="M1259 384L1280 392L1291 443L1275 443L1261 419Z" fill-opacity="0.118"/><path d="M1060 600L1057 598L1052 590L1045 578L1038 565L1033 553L1030 544L1030 540L1033 542L1038 550L1045 562L1052 575L1057 587L1060 596Z" fill-opacity="0.097"/><path d="M588 255L586 259L577 266L564 275L549 285L536 293L525 298L521 298L523 294L532 287L545 278L560 268L573 260L584 255Z" fill-opacity="0.053"/><path d="M655 376L653 379L648 382L639 385L630 387L621 387L615 386L612 384L614 381L619 378L628 375L637 373L646 373L652 374Z" fill-opacity="0.149"/></g><g filter="url(#nO5)" fill="#ff9a00" fill-rule="evenodd"><path d="M700 560L705 480L735 430L780 395L830 392L860 420L855 470L830 440L790 425L750 445L735 500L728 570Z" fill-opacity="0.195"/><path d="M996 598L993 601L990 603L985 603L981 602L976 600L972 597L969 594L967 590L967 586L968 582L971 579L974 577L979 577L983 578L988 580L992 583L995 586L997 590L997 594Z" fill-opacity="0.231"/><path d="M814 760L813 762L811 765L808 766L804 768L800 768L796 768L792 766L789 765L787 762L786 760L787 758L789 755L792 754L796 752L800 752L804 752L808 754L811 755L813 758Z" fill-opacity="0.218"/><path d="M807 775L806 777L805 780L802 781L799 783L795 783L791 783L788 781L785 780L784 777L783 775L784 773L785 770L788 769L791 767L795 767L799 767L802 769L805 770L806 773Z" fill-opacity="0.218"/><path d="M834 790L833 793L831 795L828 797L824 799L820 799L816 799L812 797L809 795L807 793L806 790L807 787L809 785L812 783L816 781L820 781L824 781L828 783L831 785L833 787Z" fill-opacity="0.202"/><path d="M893 852L892 857L890 861L886 865L881 867L875 868L869 867L864 865L860 861L858 857L857 852L858 847L860 843L864 839L869 837L875 836L881 837L886 839L890 843L892 847Z" fill-opacity="0.205"/><path d="M1199 389L1226 397L1259 443L1253 457L1221 424Z" fill-opacity="0.140"/><path d="M1358 464L1382 470L1382 502L1361 497Z" fill-opacity="0.162"/><path d="M1119 600L1118 604L1114 607L1109 610L1102 611L1094 612L1086 611L1079 610L1074 607L1070 604L1069 600L1070 596L1074 593L1079 590L1086 589L1094 588L1102 589L1109 590L1114 593L1118 596Z" fill-opacity="0.119"/><path d="M699 262L698 264L696 267L693 268L689 270L684 270L679 270L675 268L672 267L670 264L669 262L670 260L672 257L675 256L679 254L684 254L689 254L693 256L696 257L698 260Z" fill-opacity="0.125"/><path d="M566 637L565 644L563 651L560 656L556 659L551 660L546 659L542 656L539 651L537 644L536 637L537 630L539 623L542 618L546 615L551 614L556 615L560 618L563 623L565 630Z" fill-opacity="0.170"/></g><g filter="url(#nO6)" fill="#ff9a00" fill-rule="evenodd"><path d="M935 607L959 604L968 595L965 581L967 518L1014 504L1019 498L1021 486L998 430L992 427L982 428L881 463L859 459L855 427L832 411L800 407L768 414L740 434L731 468L718 539L720 578L777 681L808 714L841 738L852 737L928 642L935 607ZM958 467L981 459L989 482L964 489L958 467Z" fill-opacity="0.162"/><path d="M890 470L886 480L867 501L838 527L803 553L770 575L746 589L735 590L739 580L758 559L787 533L822 507L855 485L879 471Z" fill-opacity="0.318"/><path d="M860 560L853 560L839 555L820 544L800 531L783 517L772 506L770 500L777 500L791 505L810 516L830 529L847 543L858 554Z" fill-opacity="0.231"/><path d="M790 690L850 735L900 712L950 690L880 740L830 748L795 720Z" fill-opacity="0.218"/><path d="M1127 443L1167 449L1199 470L1189 519L1151 519L1129 475Z" fill-opacity="0.130"/><path d="M472 234L521 177L564 158L569 172L521 215L480 236Z" fill-opacity="0.010"/><path d="M568 620L567 634L565 647L561 657L556 664L550 666L544 664L539 657L535 647L533 634L532 620L533 606L535 593L539 583L544 576L550 574L556 576L561 583L565 593L567 606Z" fill-opacity="0.066"/></g><g filter="url(#nO7)" fill="#ff9a00" fill-rule="evenodd"><path d="M929 600L1000 560L1010 640L960 668L930 650Z" fill-opacity="0.125"/><path d="M909 838L909 847L904 855L896 863L885 869L873 873L860 873L848 872L837 867L830 860L827 852L827 843L832 835L840 827L851 821L863 817L876 817L888 818L899 823L906 830Z" fill-opacity="0.259"/><path d="M1310 400L1350 405L1382 465L1382 502L1358 502L1334 481L1312 459Z" fill-opacity="0.053"/><path d="M611 684L610 688L607 692L603 695L598 697L592 698L586 697L581 695L577 692L574 688L573 684L574 680L577 676L581 673L586 671L592 670L598 671L603 673L607 676L610 680Z" fill-opacity="0.125"/><path d="M618 656L675 660L675 706L625 700Z" fill-opacity="0.178"/></g><g filter="url(#nO8)" fill="#ff9a00" fill-rule="evenodd"><path d="M620 600L710 585L725 670L690 700L630 700L610 650Z" fill-opacity="0.028"/><path d="M848 768L847 777L842 786L836 792L827 797L818 798L809 797L800 792L794 786L789 777L788 768L789 759L794 750L800 744L809 739L818 738L827 739L836 744L842 750L847 759Z" fill-opacity="0.053"/><path d="M1027 518L1086 530L1086 610L1027 600Z" fill-opacity="0.048"/><path d="M1172 535L1242 545L1242 610L1172 610Z" fill-opacity="0.067"/><path d="M1361 430L1360 439L1357 446L1353 453L1347 457L1341 458L1335 457L1329 453L1325 446L1322 439L1321 430L1322 421L1325 414L1329 407L1335 403L1341 402L1347 403L1353 407L1357 414L1360 421Z" fill-opacity="0.067"/><path d="M1420 406L1419 411L1415 415L1410 419L1403 421L1396 422L1389 421L1382 419L1377 415L1373 411L1372 406L1373 401L1377 397L1382 393L1389 391L1396 390L1403 391L1410 393L1415 397L1419 401Z" fill-opacity="0.047"/><path d="M1550 535L1549 552L1546 567L1542 579L1536 587L1530 590L1524 587L1518 579L1514 567L1511 552L1510 535L1511 518L1514 503L1518 491L1524 483L1530 480L1536 483L1542 491L1546 503L1549 518Z" fill-opacity="0.053"/><path d="M1748 585L1749 601L1748 615L1744 627L1738 635L1731 639L1722 638L1714 632L1706 623L1700 610L1696 595L1695 579L1696 565L1700 553L1706 545L1713 541L1722 542L1730 548L1738 557L1744 570Z" fill-opacity="0.053"/><path d="M1840 340L1839 362L1835 381L1828 397L1821 407L1812 410L1803 407L1796 397L1789 381L1785 362L1784 340L1785 318L1789 299L1796 283L1803 273L1812 270L1821 273L1828 283L1835 299L1839 318Z" fill-opacity="0.047"/><path d="M1620 645L1619 653L1615 660L1610 665L1603 669L1595 670L1587 669L1580 665L1575 660L1571 653L1570 645L1571 637L1575 630L1580 625L1587 621L1595 620L1603 621L1610 625L1615 630L1619 637Z" fill-opacity="0.026"/><path d="M1530 618L1529 622L1526 625L1522 628L1516 629L1510 630L1504 629L1498 628L1494 625L1491 622L1490 618L1491 614L1494 611L1498 608L1504 607L1510 606L1516 607L1522 608L1526 611L1529 614Z" fill-opacity="0.026"/><path d="M731 378L730 387L728 394L724 401L719 405L713 406L707 405L702 401L698 394L696 387L695 378L696 369L698 362L702 355L707 351L713 350L719 351L724 355L728 362L730 369Z" fill-opacity="0.033"/><path d="M881 328L880 336L876 344L870 350L863 354L855 355L847 354L840 350L834 344L830 336L829 328L830 320L834 312L840 306L847 302L855 301L863 302L870 306L876 312L880 320Z" fill-opacity="0.033"/></g><g filter="url(#nO9)" fill="#ff9a00" fill-rule="evenodd"><path d="M775 775L774 786L769 796L763 803L754 808L745 810L736 808L727 803L721 796L716 786L715 775L716 764L721 754L727 747L736 742L745 740L754 742L763 747L769 754L774 764Z" fill-opacity="0.013"/><path d="M1040 610L1140 610L1150 700L1060 700Z" fill-opacity="0.048"/><path d="M1130 640L1129 652L1124 664L1118 672L1109 678L1100 680L1091 678L1082 672L1076 664L1071 652L1070 640L1071 628L1076 616L1082 608L1091 602L1100 600L1109 602L1118 608L1124 616L1129 628Z" fill-opacity="0.081"/><path d="M1660 475L1658 489L1653 501L1646 511L1636 518L1625 520L1614 518L1604 511L1597 501L1592 489L1590 475L1592 461L1597 449L1604 439L1614 432L1625 430L1636 432L1646 439L1653 449L1658 461Z" fill-opacity="0.023"/><path d="M1700 380L1698 392L1691 404L1681 412L1669 418L1655 420L1641 418L1629 412L1619 404L1612 392L1610 380L1612 368L1619 356L1629 348L1641 342L1655 340L1669 342L1681 348L1691 356L1698 368Z" fill-opacity="0.023"/><path d="M1480 358L1478 392L1472 423L1464 447L1452 463L1440 468L1428 463L1416 447L1408 423L1402 392L1400 358L1402 324L1408 293L1416 269L1428 253L1440 248L1452 253L1464 269L1472 293L1478 324Z" fill-opacity="0.033"/><path d="M1660 255L1659 266L1655 276L1650 283L1643 288L1635 290L1627 288L1620 283L1615 276L1611 266L1610 255L1611 244L1615 234L1620 227L1627 222L1635 220L1643 222L1650 227L1655 234L1659 244Z" fill-opacity="0.020"/><path d="M620 150L619 165L614 179L608 190L599 198L590 200L581 198L572 190L566 179L561 165L560 150L561 135L566 121L572 110L581 102L590 100L599 102L608 110L614 121L619 135Z" fill-opacity="0.020"/><path d="M900 270L898 279L892 288L884 294L872 299L860 300L848 299L836 294L828 288L822 279L820 270L822 261L828 252L836 246L848 241L860 240L872 241L884 246L892 252L898 261Z" fill-opacity="0.020"/><path d="M700 570L697 579L687 588L671 594L652 599L630 600L608 599L589 594L573 588L563 579L560 570L563 561L573 552L589 546L608 541L630 540L652 541L671 546L687 552L697 561Z" fill-opacity="0.008"/></g><g filter="url(#nO10)" fill="#ff9a00" fill-rule="evenodd"><path d="M884 432L875 408L842 385L798 379L754 390L722 413L713 425L690 536L695 589L754 697L790 735L826 762L840 767L859 765L874 755L950 659L959 633L973 628L988 615L996 594L995 539L1034 525L1045 510L1049 494L1048 479L1025 420L1004 401L975 401L884 432Z" fill-opacity="0.033"/><path d="M950 800L946 822L933 841L913 857L888 867L860 870L832 867L807 857L787 841L774 822L770 800L774 778L787 759L807 743L832 733L860 730L888 733L913 743L933 759L946 778Z" fill-opacity="0.008"/><path d="M1000 350L1200 350L1440 420L1440 600L1200 610L1000 600Z" fill-opacity="0.010"/><path d="M1311 247L1430 250L1500 300L1490 409L1311 409Z" fill-opacity="0.013"/><path d="M1198 331L1301 331L1301 460L1198 460Z" fill-opacity="0.023"/></g><g filter="url(#nR0)" fill="#ff6400" fill-rule="evenodd"><path d="M850 484L986 438L990 445L853 492Z" fill-opacity="0.138"/><path d="M984 438L991 437L1011 489L1004 494Z" fill-opacity="0.138"/><path d="M927 510L1007 487L1010 495L930 518Z" fill-opacity="0.138"/><path d="M906 474L915 472L958 592L949 596Z" fill-opacity="0.138"/></g><g filter="url(#nR2)" fill="#ff6400" fill-rule="evenodd"><path d="M892 478L986 445L1003 488L930 509Z" fill-opacity="0.008"/><path d="M1048 405L1078 405L1075 419L1065 419Z" fill-opacity="0.063"/></g><g filter="url(#nR3)" fill="#ff6400" fill-rule="evenodd"><path d="M748 441L770 424L800 417L830 421L846 432L850 468L892 475L920 468L946 462L958 506L954 595L927 598L919 637L895 670L869 698L846 729L815 706L785 675L754 621L730 575L728 540L733 514L741 470Z" fill-opacity="0.207"/><path d="M960 684L956 688L943 694L923 701L902 708L882 714L868 716L862 716L866 712L879 706L899 699L920 692L940 686L954 684Z" fill-opacity="0.073"/><path d="M1018 650L1016 654L1009 660L998 667L985 675L973 681L964 684L960 684L962 680L969 674L980 667L993 659L1005 653L1014 650Z" fill-opacity="0.065"/><path d="M985 560L985 563L983 569L980 577L975 586L971 594L967 599L965 600L965 597L967 591L970 583L975 574L979 566L983 561Z" fill-opacity="0.065"/></g><g filter="url(#nR4)" fill="#ff6400" fill-rule="evenodd"><path d="M640 640L690 600L735 570L752 600L715 630L700 650L675 670Z" fill-opacity="0.113"/><path d="M1016 422L1038 422L1040 451L1086 465L1081 484L1054 478L1022 451Z" fill-opacity="0.065"/><path d="M655 376L653 379L648 382L639 385L630 387L621 387L615 386L612 384L614 381L619 378L628 375L637 373L646 373L652 374Z" fill-opacity="0.032"/></g><g filter="url(#nR5)" fill="#ff6400" fill-rule="evenodd"><path d="M700 560L705 480L735 430L780 395L830 392L860 420L855 470L830 440L790 425L750 445L735 500L728 570Z" fill-opacity="0.042"/><path d="M996 598L993 601L990 603L985 603L981 602L976 600L972 597L969 594L967 590L967 586L968 582L971 579L974 577L979 577L983 578L988 580L992 583L995 586L997 590L997 594Z" fill-opacity="0.049"/><path d="M814 760L813 762L811 765L808 766L804 768L800 768L796 768L792 766L789 765L787 762L786 760L787 758L789 755L792 754L796 752L800 752L804 752L808 754L811 755L813 758Z" fill-opacity="0.026"/><path d="M807 775L806 777L805 780L802 781L799 783L795 783L791 783L788 781L785 780L784 777L783 775L784 773L785 770L788 769L791 767L795 767L799 767L802 769L805 770L806 773Z" fill-opacity="0.026"/><path d="M834 790L833 793L831 795L828 797L824 799L820 799L816 799L812 797L809 795L807 793L806 790L807 787L809 785L812 783L816 781L820 781L824 781L828 783L831 785L833 787Z" fill-opacity="0.024"/><path d="M893 852L892 857L890 861L886 865L881 867L875 868L869 867L864 865L860 861L858 857L857 852L858 847L860 843L864 839L869 837L875 836L881 837L886 839L890 843L892 847Z" fill-opacity="0.120"/><path d="M1199 389L1226 397L1259 443L1253 457L1221 424Z" fill-opacity="0.017"/><path d="M1358 464L1382 470L1382 502L1361 497Z" fill-opacity="0.035"/><path d="M699 262L698 264L696 267L693 268L689 270L684 270L679 270L675 268L672 267L670 264L669 262L670 260L672 257L675 256L679 254L684 254L689 254L693 256L696 257L698 260Z" fill-opacity="0.015"/></g><g filter="url(#nR6)" fill="#ff6400" fill-rule="evenodd"><path d="M935 607L959 604L968 595L965 581L967 518L1014 504L1019 498L1021 486L998 430L992 427L982 428L881 463L859 459L855 427L832 411L800 407L768 414L740 434L731 468L718 539L720 578L777 681L808 714L841 738L852 737L928 642L935 607ZM958 467L981 459L989 482L964 489L958 467Z" fill-opacity="0.035"/><path d="M890 470L886 480L867 501L838 527L803 553L770 575L746 589L735 590L739 580L758 559L787 533L822 507L855 485L879 471Z" fill-opacity="0.120"/><path d="M860 560L853 560L839 555L820 544L800 531L783 517L772 506L770 500L777 500L791 505L810 516L830 529L847 543L858 554Z" fill-opacity="0.090"/><path d="M790 690L850 735L900 712L950 690L880 740L830 748L795 720Z" fill-opacity="0.026"/><path d="M1127 443L1167 449L1199 470L1189 519L1151 519L1129 475Z" fill-opacity="0.028"/></g><g filter="url(#nR7)" fill="#ff6400" fill-rule="evenodd"><path d="M929 600L1000 560L1010 640L960 668L930 650Z" fill-opacity="0.015"/><path d="M909 838L909 847L904 855L896 863L885 869L873 873L860 873L848 872L837 867L830 860L827 852L827 843L832 835L840 827L851 821L863 817L876 817L888 818L899 823L906 830Z" fill-opacity="0.031"/><path d="M1310 400L1350 405L1382 465L1382 502L1358 502L1334 481L1312 459Z" fill-opacity="0.007"/><path d="M611 684L610 688L607 692L603 695L598 697L592 698L586 697L581 695L577 692L574 688L573 684L574 680L577 676L581 673L586 671L592 670L598 671L603 673L607 676L610 680Z" fill-opacity="0.015"/><path d="M618 656L675 660L675 706L625 700Z" fill-opacity="0.021"/></g><g filter="url(#nR8)" fill="#ff6400" fill-rule="evenodd"><path d="M620 600L710 585L725 670L690 700L630 700L610 650Z" fill-opacity="0.006"/><path d="M848 768L847 777L842 786L836 792L827 797L818 798L809 797L800 792L794 786L789 777L788 768L789 759L794 750L800 744L809 739L818 738L827 739L836 744L842 750L847 759Z" fill-opacity="0.007"/><path d="M1027 518L1086 530L1086 610L1027 600Z" fill-opacity="0.010"/><path d="M1172 535L1242 545L1242 610L1172 610Z" fill-opacity="0.008"/><path d="M1361 430L1360 439L1357 446L1353 453L1347 457L1341 458L1335 457L1329 453L1325 446L1322 439L1321 430L1322 421L1325 414L1329 407L1335 403L1341 402L1347 403L1353 407L1357 414L1360 421Z" fill-opacity="0.008"/><path d="M1420 406L1419 411L1415 415L1410 419L1403 421L1396 422L1389 421L1382 419L1377 415L1373 411L1372 406L1373 401L1377 397L1382 393L1389 391L1396 390L1403 391L1410 393L1415 397L1419 401Z" fill-opacity="0.006"/><path d="M1550 535L1549 552L1546 567L1542 579L1536 587L1530 590L1524 587L1518 579L1514 567L1511 552L1510 535L1511 518L1514 503L1518 491L1524 483L1530 480L1536 483L1542 491L1546 503L1549 518Z" fill-opacity="0.007"/><path d="M1748 585L1749 601L1748 615L1744 627L1738 635L1731 639L1722 638L1714 632L1706 623L1700 610L1696 595L1695 579L1696 565L1700 553L1706 545L1713 541L1722 542L1730 548L1738 557L1744 570Z" fill-opacity="0.007"/><path d="M1840 340L1839 362L1835 381L1828 397L1821 407L1812 410L1803 407L1796 397L1789 381L1785 362L1784 340L1785 318L1789 299L1796 283L1803 273L1812 270L1821 273L1828 283L1835 299L1839 318Z" fill-opacity="0.006"/><path d="M1620 645L1619 653L1615 660L1610 665L1603 669L1595 670L1587 669L1580 665L1575 660L1571 653L1570 645L1571 637L1575 630L1580 625L1587 621L1595 620L1603 621L1610 625L1615 630L1619 637Z" fill-opacity="0.003"/><path d="M1530 618L1529 622L1526 625L1522 628L1516 629L1510 630L1504 629L1498 628L1494 625L1491 622L1490 618L1491 614L1494 611L1498 608L1504 607L1510 606L1516 607L1522 608L1526 611L1529 614Z" fill-opacity="0.003"/><path d="M731 378L730 387L728 394L724 401L719 405L713 406L707 405L702 401L698 394L696 387L695 378L696 369L698 362L702 355L707 351L713 350L719 351L724 355L728 362L730 369Z" fill-opacity="0.004"/><path d="M881 328L880 336L876 344L870 350L863 354L855 355L847 354L840 350L834 344L830 336L829 328L830 320L834 312L840 306L847 302L855 301L863 302L870 306L876 312L880 320Z" fill-opacity="0.004"/></g><g filter="url(#nR9)" fill="#ff6400" fill-rule="evenodd"><path d="M775 775L774 786L769 796L763 803L754 808L745 810L736 808L727 803L721 796L716 786L715 775L716 764L721 754L727 747L736 742L745 740L754 742L763 747L769 754L774 764Z" fill-opacity="0.002"/><path d="M1040 610L1140 610L1150 700L1060 700Z" fill-opacity="0.010"/><path d="M1130 640L1129 652L1124 664L1118 672L1109 678L1100 680L1091 678L1082 672L1076 664L1071 652L1070 640L1071 628L1076 616L1082 608L1091 602L1100 600L1109 602L1118 608L1124 616L1129 628Z" fill-opacity="0.010"/><path d="M1660 475L1658 489L1653 501L1646 511L1636 518L1625 520L1614 518L1604 511L1597 501L1592 489L1590 475L1592 461L1597 449L1604 439L1614 432L1625 430L1636 432L1646 439L1653 449L1658 461Z" fill-opacity="0.003"/><path d="M1700 380L1698 392L1691 404L1681 412L1669 418L1655 420L1641 418L1629 412L1619 404L1612 392L1610 380L1612 368L1619 356L1629 348L1641 342L1655 340L1669 342L1681 348L1691 356L1698 368Z" fill-opacity="0.003"/><path d="M1480 358L1478 392L1472 423L1464 447L1452 463L1440 468L1428 463L1416 447L1408 423L1402 392L1400 358L1402 324L1408 293L1416 269L1428 253L1440 248L1452 253L1464 269L1472 293L1478 324Z" fill-opacity="0.004"/><path d="M1660 255L1659 266L1655 276L1650 283L1643 288L1635 290L1627 288L1620 283L1615 276L1611 266L1610 255L1611 244L1615 234L1620 227L1627 222L1635 220L1643 222L1650 227L1655 234L1659 244Z" fill-opacity="0.002"/><path d="M620 150L619 165L614 179L608 190L599 198L590 200L581 198L572 190L566 179L561 165L560 150L561 135L566 121L572 110L581 102L590 100L599 102L608 110L614 121L619 135Z" fill-opacity="0.002"/><path d="M900 270L898 279L892 288L884 294L872 299L860 300L848 299L836 294L828 288L822 279L820 270L822 261L828 252L836 246L848 241L860 240L872 241L884 246L892 252L898 261Z" fill-opacity="0.002"/><path d="M700 570L697 579L687 588L671 594L652 599L630 600L608 599L589 594L573 588L563 579L560 570L563 561L573 552L589 546L608 541L630 540L652 541L671 546L687 552L697 561Z" fill-opacity="0.001"/></g><g filter="url(#nR10)" fill="#ff6400" fill-rule="evenodd"><path d="M884 432L875 408L842 385L798 379L754 390L722 413L713 425L690 536L695 589L754 697L790 735L826 762L840 767L859 765L874 755L950 659L959 633L973 628L988 615L996 594L995 539L1034 525L1045 510L1049 494L1048 479L1025 420L1004 401L975 401L884 432Z" fill-opacity="0.004"/><path d="M950 800L946 822L933 841L913 857L888 867L860 870L832 867L807 857L787 841L774 822L770 800L774 778L787 759L807 743L832 733L860 730L888 733L913 743L933 759L946 778Z" fill-opacity="0.001"/><path d="M1000 350L1200 350L1440 420L1440 600L1200 610L1000 600Z" fill-opacity="0.001"/><path d="M1311 247L1430 250L1500 300L1490 409L1311 409Z" fill-opacity="0.002"/><path d="M1198 331L1301 331L1301 460L1198 460Z" fill-opacity="0.005"/></g><g filter="url(#nY0)" fill="#ffee00" fill-rule="evenodd"><path d="M850 484L986 438L990 445L853 492Z" fill-opacity="0.325"/><path d="M984 438L991 437L1011 489L1004 494Z" fill-opacity="0.325"/><path d="M927 510L1007 487L1010 495L930 518Z" fill-opacity="0.325"/><path d="M906 474L915 472L958 592L949 596Z" fill-opacity="0.325"/></g><g filter="url(#nY2)" fill="#ffee00" fill-rule="evenodd"><path d="M892 478L986 445L1003 488L930 509Z" fill-opacity="0.027"/><path d="M989 493L989 496L988 498L986 501L983 502L980 504L977 504L973 504L971 503L969 501L967 499L967 496L968 494L970 491L973 490L976 488L979 488L983 488L985 489L987 491Z" fill-opacity="0.444"/><path d="M770 560L850 515L905 560L910 640L870 700L830 690L785 640Z" fill-opacity="0.196"/><path d="M1057 664L1057 666L1057 669L1055 673L1053 678L1051 682L1048 684L1047 685L1047 683L1047 680L1049 676L1051 671L1053 667L1056 665Z" fill-opacity="0.231"/><path d="M1086 392L1105 395L1127 424L1121 427L1089 400Z" fill-opacity="0.316"/><path d="M1048 405L1078 405L1075 419L1065 419Z" fill-opacity="0.176"/><path d="M1081 432L1113 457L1119 470L1105 470L1081 443Z" fill-opacity="0.340"/><path d="M1382 330L1404 335L1399 346L1388 344Z" fill-opacity="0.340"/><path d="M1435 301L1433 300L1427 294L1421 286L1414 277L1407 268L1404 262L1403 259L1405 260L1411 266L1417 274L1424 283L1431 292L1434 298Z" fill-opacity="0.306"/><path d="M1387 301L1385 301L1382 299L1379 295L1375 290L1372 286L1370 283L1370 281L1372 281L1375 283L1378 287L1382 292L1385 296L1387 299Z" fill-opacity="0.306"/><path d="M1352 296L1351 296L1348 294L1345 291L1342 288L1339 285L1338 282L1338 281L1339 281L1342 283L1345 286L1348 289L1351 292L1352 295Z" fill-opacity="0.306"/><path d="M1400 347L1398 346L1394 342L1390 336L1386 328L1383 321L1381 316L1381 314L1383 315L1387 319L1391 325L1395 333L1398 340L1400 345Z" fill-opacity="0.282"/><path d="M1321 316L1321 318L1320 319L1319 320L1317 321L1315 321L1313 321L1311 320L1310 319L1309 318L1309 316L1309 314L1310 313L1311 312L1313 311L1315 311L1317 311L1319 312L1320 313L1321 314Z" fill-opacity="0.306"/><path d="M1290 444L1287 442L1282 434L1275 422L1268 409L1262 397L1258 389L1258 385L1261 387L1266 395L1273 407L1280 420L1286 432L1290 440Z" fill-opacity="0.220"/><path d="M1200 300L1198 300L1195 299L1191 296L1186 293L1183 289L1180 287L1180 285L1182 285L1185 286L1189 289L1194 292L1197 296L1200 298Z" fill-opacity="0.239"/><path d="M1225 268L1224 268L1222 265L1219 262L1217 258L1216 254L1215 251L1215 250L1216 250L1218 253L1221 256L1223 260L1224 264L1225 267Z" fill-opacity="0.239"/></g><g filter="url(#nY3)" fill="#ffee00" fill-rule="evenodd"><path d="M748 441L770 424L800 417L830 421L846 432L850 468L892 475L920 468L946 462L958 506L954 595L927 598L919 637L895 670L869 698L846 729L815 706L785 675L754 621L730 575L728 540L733 514L741 470Z" fill-opacity="0.540"/><path d="M960 684L956 688L943 694L923 701L902 708L882 714L868 716L862 716L866 712L879 706L899 699L920 692L940 686L954 684Z" fill-opacity="0.204"/><path d="M1018 650L1016 654L1009 660L998 667L985 675L973 681L964 684L960 684L962 680L969 674L980 667L993 659L1005 653L1014 650Z" fill-opacity="0.184"/><path d="M1050 634L1049 636L1045 640L1038 643L1031 647L1024 649L1018 649L1016 648L1017 646L1021 642L1028 639L1035 635L1042 633L1048 633Z" fill-opacity="0.250"/><path d="M985 560L985 563L983 569L980 577L975 586L971 594L967 599L965 600L965 597L967 591L970 583L975 574L979 566L983 561Z" fill-opacity="0.184"/></g><g filter="url(#nY4)" fill="#ffee00" fill-rule="evenodd"><path d="M640 640L690 600L735 570L752 600L715 630L700 650L675 670Z" fill-opacity="0.284"/><path d="M645 612L672 605L686 615L690 645L682 662L660 662L648 648Z" fill-opacity="0.485"/><path d="M1140 360L1156 365L1186 397L1183 432L1167 432L1151 411L1135 395Z" fill-opacity="0.307"/><path d="M1016 422L1038 422L1040 451L1086 465L1081 484L1054 478L1022 451Z" fill-opacity="0.184"/><path d="M1259 384L1280 392L1291 443L1275 443L1261 419Z" fill-opacity="0.190"/><path d="M1060 600L1057 598L1052 590L1045 578L1038 565L1033 553L1030 544L1030 540L1033 542L1038 550L1045 562L1052 575L1057 587L1060 596Z" fill-opacity="0.176"/><path d="M588 255L586 259L577 266L564 275L549 285L536 293L525 298L521 298L523 294L532 287L545 278L560 268L573 260L584 255Z" fill-opacity="0.096"/><path d="M655 376L653 379L648 382L639 385L630 387L621 387L615 386L612 384L614 381L619 378L628 375L637 373L646 373L652 374Z" fill-opacity="0.101"/></g><g filter="url(#nY5)" fill="#ffee00" fill-rule="evenodd"><path d="M700 560L705 480L735 430L780 395L830 392L860 420L855 470L830 440L790 425L750 445L735 500L728 570Z" fill-opacity="0.127"/><path d="M996 598L993 601L990 603L985 603L981 602L976 600L972 597L969 594L967 590L967 586L968 582L971 579L974 577L979 577L983 578L988 580L992 583L995 586L997 590L997 594Z" fill-opacity="0.146"/><path d="M814 760L813 762L811 765L808 766L804 768L800 768L796 768L792 766L789 765L787 762L786 760L787 758L789 755L792 754L796 752L800 752L804 752L808 754L811 755L813 758Z" fill-opacity="0.081"/><path d="M807 775L806 777L805 780L802 781L799 783L795 783L791 783L788 781L785 780L784 777L783 775L784 773L785 770L788 769L791 767L795 767L799 767L802 769L805 770L806 773Z" fill-opacity="0.081"/><path d="M834 790L833 793L831 795L828 797L824 799L820 799L816 799L812 797L809 795L807 793L806 790L807 787L809 785L812 783L816 781L820 781L824 781L828 783L831 785L833 787Z" fill-opacity="0.076"/><path d="M1199 389L1226 397L1259 443L1253 457L1221 424Z" fill-opacity="0.054"/><path d="M1358 464L1382 470L1382 502L1361 497Z" fill-opacity="0.108"/><path d="M1119 600L1118 604L1114 607L1109 610L1102 611L1094 612L1086 611L1079 610L1074 607L1070 604L1069 600L1070 596L1074 593L1079 590L1086 589L1094 588L1102 589L1109 590L1114 593L1118 596Z" fill-opacity="0.207"/><path d="M699 262L698 264L696 267L693 268L689 270L684 270L679 270L675 268L672 267L670 264L669 262L670 260L672 257L675 256L679 254L684 254L689 254L693 256L696 257L698 260Z" fill-opacity="0.049"/><path d="M566 637L565 644L563 651L560 656L556 659L551 660L546 659L542 656L539 651L537 644L536 637L537 630L539 623L542 618L546 615L551 614L556 615L560 618L563 623L565 630Z" fill-opacity="0.272"/></g><g filter="url(#nY6)" fill="#ffee00" fill-rule="evenodd"><path d="M935 607L959 604L968 595L965 581L967 518L1014 504L1019 498L1021 486L998 430L992 427L982 428L881 463L859 459L855 427L832 411L800 407L768 414L740 434L731 468L718 539L720 578L777 681L808 714L841 738L852 737L928 642L935 607ZM958 467L981 459L989 482L964 489L958 467Z" fill-opacity="0.108"/><path d="M790 690L850 735L900 712L950 690L880 740L830 748L795 720Z" fill-opacity="0.081"/><path d="M1127 443L1167 449L1199 470L1189 519L1151 519L1129 475Z" fill-opacity="0.090"/><path d="M472 234L521 177L564 158L569 172L521 215L480 236Z" fill-opacity="0.020"/><path d="M568 620L567 634L565 647L561 657L556 664L550 666L544 664L539 657L535 647L533 634L532 620L533 606L535 593L539 583L544 576L550 574L556 576L561 583L565 593L567 606Z" fill-opacity="0.127"/></g><g filter="url(#nY7)" fill="#ffee00" fill-rule="evenodd"><path d="M929 600L1000 560L1010 640L960 668L930 650Z" fill-opacity="0.049"/><path d="M909 838L909 847L904 855L896 863L885 869L873 873L860 873L848 872L837 867L830 860L827 852L827 843L832 835L840 827L851 821L863 817L876 817L888 818L899 823L906 830Z" fill-opacity="0.095"/><path d="M1310 400L1350 405L1382 465L1382 502L1358 502L1334 481L1312 459Z" fill-opacity="0.022"/><path d="M611 684L610 688L607 692L603 695L598 697L592 698L586 697L581 695L577 692L574 688L573 684L574 680L577 676L581 673L586 671L592 670L598 671L603 673L607 676L610 680Z" fill-opacity="0.049"/><path d="M618 656L675 660L675 706L625 700Z" fill-opacity="0.068"/></g><g filter="url(#nY8)" fill="#ffee00" fill-rule="evenodd"><path d="M620 600L710 585L725 670L690 700L630 700L610 650Z" fill-opacity="0.021"/><path d="M848 768L847 777L842 786L836 792L827 797L818 798L809 797L800 792L794 786L789 777L788 768L789 759L794 750L800 744L809 739L818 738L827 739L836 744L842 750L847 759Z" fill-opacity="0.022"/><path d="M1027 518L1086 530L1086 610L1027 600Z" fill-opacity="0.035"/><path d="M1172 535L1242 545L1242 610L1172 610Z" fill-opacity="0.027"/><path d="M1361 430L1360 439L1357 446L1353 453L1347 457L1341 458L1335 457L1329 453L1325 446L1322 439L1321 430L1322 421L1325 414L1329 407L1335 403L1341 402L1347 403L1353 407L1357 414L1360 421Z" fill-opacity="0.027"/><path d="M1420 406L1419 411L1415 415L1410 419L1403 421L1396 422L1389 421L1382 419L1377 415L1373 411L1372 406L1373 401L1377 397L1382 393L1389 391L1396 390L1403 391L1410 393L1415 397L1419 401Z" fill-opacity="0.019"/><path d="M1550 535L1549 552L1546 567L1542 579L1536 587L1530 590L1524 587L1518 579L1514 567L1511 552L1510 535L1511 518L1514 503L1518 491L1524 483L1530 480L1536 483L1542 491L1546 503L1549 518Z" fill-opacity="0.022"/><path d="M1748 585L1749 601L1748 615L1744 627L1738 635L1731 639L1722 638L1714 632L1706 623L1700 610L1696 595L1695 579L1696 565L1700 553L1706 545L1713 541L1722 542L1730 548L1738 557L1744 570Z" fill-opacity="0.022"/><path d="M1840 340L1839 362L1835 381L1828 397L1821 407L1812 410L1803 407L1796 397L1789 381L1785 362L1784 340L1785 318L1789 299L1796 283L1803 273L1812 270L1821 273L1828 283L1835 299L1839 318Z" fill-opacity="0.019"/><path d="M1620 645L1619 653L1615 660L1610 665L1603 669L1595 670L1587 669L1580 665L1575 660L1571 653L1570 645L1571 637L1575 630L1580 625L1587 621L1595 620L1603 621L1610 625L1615 630L1619 637Z" fill-opacity="0.011"/><path d="M1530 618L1529 622L1526 625L1522 628L1516 629L1510 630L1504 629L1498 628L1494 625L1491 622L1490 618L1491 614L1494 611L1498 608L1504 607L1510 606L1516 607L1522 608L1526 611L1529 614Z" fill-opacity="0.011"/><path d="M731 378L730 387L728 394L724 401L719 405L713 406L707 405L702 401L698 394L696 387L695 378L696 369L698 362L702 355L707 351L713 350L719 351L724 355L728 362L730 369Z" fill-opacity="0.014"/><path d="M881 328L880 336L876 344L870 350L863 354L855 355L847 354L840 350L834 344L830 336L829 328L830 320L834 312L840 306L847 302L855 301L863 302L870 306L876 312L880 320Z" fill-opacity="0.014"/></g><g filter="url(#nY9)" fill="#ffee00" fill-rule="evenodd"><path d="M775 775L774 786L769 796L763 803L754 808L745 810L736 808L727 803L721 796L716 786L715 775L716 764L721 754L727 747L736 742L745 740L754 742L763 747L769 754L774 764Z" fill-opacity="0.005"/><path d="M1040 610L1140 610L1150 700L1060 700Z" fill-opacity="0.035"/><path d="M1130 640L1129 652L1124 664L1118 672L1109 678L1100 680L1091 678L1082 672L1076 664L1071 652L1070 640L1071 628L1076 616L1082 608L1091 602L1100 600L1109 602L1118 608L1124 616L1129 628Z" fill-opacity="0.032"/><path d="M1660 475L1658 489L1653 501L1646 511L1636 518L1625 520L1614 518L1604 511L1597 501L1592 489L1590 475L1592 461L1597 449L1604 439L1614 432L1625 430L1636 432L1646 439L1653 449L1658 461Z" fill-opacity="0.009"/><path d="M1700 380L1698 392L1691 404L1681 412L1669 418L1655 420L1641 418L1629 412L1619 404L1612 392L1610 380L1612 368L1619 356L1629 348L1641 342L1655 340L1669 342L1681 348L1691 356L1698 368Z" fill-opacity="0.009"/><path d="M1480 358L1478 392L1472 423L1464 447L1452 463L1440 468L1428 463L1416 447L1408 423L1402 392L1400 358L1402 324L1408 293L1416 269L1428 253L1440 248L1452 253L1464 269L1472 293L1478 324Z" fill-opacity="0.014"/><path d="M1660 255L1659 266L1655 276L1650 283L1643 288L1635 290L1627 288L1620 283L1615 276L1611 266L1610 255L1611 244L1615 234L1620 227L1627 222L1635 220L1643 222L1650 227L1655 234L1659 244Z" fill-opacity="0.008"/><path d="M620 150L619 165L614 179L608 190L599 198L590 200L581 198L572 190L566 179L561 165L560 150L561 135L566 121L572 110L581 102L590 100L599 102L608 110L614 121L619 135Z" fill-opacity="0.008"/><path d="M900 270L898 279L892 288L884 294L872 299L860 300L848 299L836 294L828 288L822 279L820 270L822 261L828 252L836 246L848 241L860 240L872 241L884 246L892 252L898 261Z" fill-opacity="0.008"/><path d="M700 570L697 579L687 588L671 594L652 599L630 600L608 599L589 594L573 588L563 579L560 570L563 561L573 552L589 546L608 541L630 540L652 541L671 546L687 552L697 561Z" fill-opacity="0.003"/></g><g filter="url(#nY10)" fill="#ffee00" fill-rule="evenodd"><path d="M884 432L875 408L842 385L798 379L754 390L722 413L713 425L690 536L695 589L754 697L790 735L826 762L840 767L859 765L874 755L950 659L959 633L973 628L988 615L996 594L995 539L1034 525L1045 510L1049 494L1048 479L1025 420L1004 401L975 401L884 432Z" fill-opacity="0.014"/><path d="M950 800L946 822L933 841L913 857L888 867L860 870L832 867L807 857L787 841L774 822L770 800L774 778L787 759L807 743L832 733L860 730L888 733L913 743L933 759L946 778Z" fill-opacity="0.003"/><path d="M1000 350L1200 350L1440 420L1440 600L1200 610L1000 600Z" fill-opacity="0.004"/><path d="M1311 247L1430 250L1500 300L1490 409L1311 409Z" fill-opacity="0.005"/><path d="M1198 331L1301 331L1301 460L1198 460Z" fill-opacity="0.018"/></g><g filter="url(#nL0)" fill="#ccff00" fill-rule="evenodd"><path d="M850 484L986 438L990 445L853 492Z" fill-opacity="0.085"/><path d="M984 438L991 437L1011 489L1004 494Z" fill-opacity="0.085"/><path d="M927 510L1007 487L1010 495L930 518Z" fill-opacity="0.085"/><path d="M906 474L915 472L958 592L949 596Z" fill-opacity="0.085"/></g><g filter="url(#nL2)" fill="#ccff00" fill-rule="evenodd"><path d="M989 493L989 496L988 498L986 501L983 502L980 504L977 504L973 504L971 503L969 501L967 499L967 496L968 494L970 491L973 490L976 488L979 488L983 488L985 489L987 491Z" fill-opacity="0.438"/><path d="M770 560L850 515L905 560L910 640L870 700L830 690L785 640Z" fill-opacity="0.256"/><path d="M755 455L800 425L845 450L830 520L770 540Z" fill-opacity="0.268"/><path d="M1057 664L1057 666L1057 669L1055 673L1053 678L1051 682L1048 684L1047 685L1047 683L1047 680L1049 676L1051 671L1053 667L1056 665Z" fill-opacity="0.288"/><path d="M1086 392L1105 395L1127 424L1121 427L1089 400Z" fill-opacity="0.165"/><path d="M1081 432L1113 457L1119 470L1105 470L1081 443Z" fill-opacity="0.110"/><path d="M1382 330L1404 335L1399 346L1388 344Z" fill-opacity="0.110"/><path d="M1435 301L1433 300L1427 294L1421 286L1414 277L1407 268L1404 262L1403 259L1405 260L1411 266L1417 274L1424 283L1431 292L1434 298Z" fill-opacity="0.100"/><path d="M1387 301L1385 301L1382 299L1379 295L1375 290L1372 286L1370 283L1370 281L1372 281L1375 283L1378 287L1382 292L1385 296L1387 299Z" fill-opacity="0.100"/><path d="M1352 296L1351 296L1348 294L1345 291L1342 288L1339 285L1338 282L1338 281L1339 281L1342 283L1345 286L1348 289L1351 292L1352 295Z" fill-opacity="0.100"/><path d="M1400 347L1398 346L1394 342L1390 336L1386 328L1383 321L1381 316L1381 314L1383 315L1387 319L1391 325L1395 333L1398 340L1400 345Z" fill-opacity="0.150"/><path d="M1321 316L1321 318L1320 319L1319 320L1317 321L1315 321L1313 321L1311 320L1310 319L1309 318L1309 316L1309 314L1310 313L1311 312L1313 311L1315 311L1317 311L1319 312L1320 313L1321 314Z" fill-opacity="0.100"/><path d="M1290 444L1287 442L1282 434L1275 422L1268 409L1262 397L1258 389L1258 385L1261 387L1266 395L1273 407L1280 420L1286 432L1290 440Z" fill-opacity="0.121"/><path d="M1200 300L1198 300L1195 299L1191 296L1186 293L1183 289L1180 287L1180 285L1182 285L1185 286L1189 289L1194 292L1197 296L1200 298Z" fill-opacity="0.080"/><path d="M1225 268L1224 268L1222 265L1219 262L1217 258L1216 254L1215 251L1215 250L1216 250L1218 253L1221 256L1223 260L1224 264L1225 267Z" fill-opacity="0.080"/></g><g filter="url(#nL3)" fill="#ccff00" fill-rule="evenodd"><path d="M748 441L770 424L800 417L830 421L846 432L850 468L892 475L920 468L946 462L958 506L954 595L927 598L919 637L895 670L869 698L846 729L815 706L785 675L754 621L730 575L728 540L733 514L741 470Z" fill-opacity="0.259"/><path d="M960 684L956 688L943 694L923 701L902 708L882 714L868 716L862 716L866 712L879 706L899 699L920 692L940 686L954 684Z" fill-opacity="0.055"/><path d="M1018 650L1016 654L1009 660L998 667L985 675L973 681L964 684L960 684L962 680L969 674L980 667L993 659L1005 653L1014 650Z" fill-opacity="0.050"/><path d="M1050 634L1049 636L1045 640L1038 643L1031 647L1024 649L1018 649L1016 648L1017 646L1021 642L1028 639L1035 635L1042 633L1048 633Z" fill-opacity="0.135"/><path d="M985 560L985 563L983 569L980 577L975 586L971 594L967 599L965 600L965 597L967 591L970 583L975 574L979 566L983 561Z" fill-opacity="0.050"/></g><g filter="url(#nL4)" fill="#ccff00" fill-rule="evenodd"><path d="M640 640L690 600L735 570L752 600L715 630L700 650L675 670Z" fill-opacity="0.075"/><path d="M645 612L672 605L686 615L690 645L682 662L660 662L648 648Z" fill-opacity="0.150"/><path d="M1140 360L1156 365L1186 397L1183 432L1167 432L1151 411L1135 395Z" fill-opacity="0.064"/><path d="M1016 422L1038 422L1040 451L1086 465L1081 484L1054 478L1022 451Z" fill-opacity="0.050"/><path d="M1259 384L1280 392L1291 443L1275 443L1261 419Z" fill-opacity="0.106"/><path d="M1060 600L1057 598L1052 590L1045 578L1038 565L1033 553L1030 544L1030 540L1033 542L1038 550L1045 562L1052 575L1057 587L1060 596Z" fill-opacity="0.060"/><path d="M588 255L586 259L577 266L564 275L549 285L536 293L525 298L521 298L523 294L532 287L545 278L560 268L573 260L584 255Z" fill-opacity="0.057"/><path d="M655 376L653 379L648 382L639 385L630 387L621 387L615 386L612 384L614 381L619 378L628 375L637 373L646 373L652 374Z" fill-opacity="0.028"/></g><g filter="url(#nL5)" fill="#ccff00" fill-rule="evenodd"><path d="M700 560L705 480L735 430L780 395L830 392L860 420L855 470L830 440L790 425L750 445L735 500L728 570Z" fill-opacity="0.035"/><path d="M996 598L993 601L990 603L985 603L981 602L976 600L972 597L969 594L967 590L967 586L968 582L971 579L974 577L979 577L983 578L988 580L992 583L995 586L997 590L997 594Z" fill-opacity="0.040"/><path d="M1358 464L1382 470L1382 502L1361 497Z" fill-opacity="0.030"/><path d="M1119 600L1118 604L1114 607L1109 610L1102 611L1094 612L1086 611L1079 610L1074 607L1070 604L1069 600L1070 596L1074 593L1079 590L1086 589L1094 588L1102 589L1109 590L1114 593L1118 596Z" fill-opacity="0.070"/><path d="M566 637L565 644L563 651L560 656L556 659L551 660L546 659L542 656L539 651L537 644L536 637L537 630L539 623L542 618L546 615L551 614L556 615L560 618L563 623L565 630Z" fill-opacity="0.090"/></g><g filter="url(#nL6)" fill="#ccff00" fill-rule="evenodd"><path d="M935 607L959 604L968 595L965 581L967 518L1014 504L1019 498L1021 486L998 430L992 427L982 428L881 463L859 459L855 427L832 411L800 407L768 414L740 434L731 468L718 539L720 578L777 681L808 714L841 738L852 737L928 642L935 607ZM958 467L981 459L989 482L964 489L958 467Z" fill-opacity="0.030"/><path d="M1127 443L1167 449L1199 470L1189 519L1151 519L1129 475Z" fill-opacity="0.025"/><path d="M472 234L521 177L564 158L569 172L521 215L480 236Z" fill-opacity="0.013"/><path d="M568 620L567 634L565 647L561 657L556 664L550 666L544 664L539 657L535 647L533 634L532 620L533 606L535 593L539 583L544 576L550 574L556 576L561 583L565 593L567 606Z" fill-opacity="0.044"/></g><g filter="url(#nL8)" fill="#ccff00" fill-rule="evenodd"><path d="M620 600L710 585L725 670L690 700L630 700L610 650Z" fill-opacity="0.006"/><path d="M1027 518L1086 530L1086 610L1027 600Z" fill-opacity="0.010"/></g><g filter="url(#nL9)" fill="#ccff00" fill-rule="evenodd"><path d="M1040 610L1140 610L1150 700L1060 700Z" fill-opacity="0.010"/></g><g filter="url(#nL10)" fill="#ccff00" fill-rule="evenodd"><path d="M1198 331L1301 331L1301 460L1198 460Z" fill-opacity="0.005"/></g><g filter="url(#nG2)" fill="#55f000" fill-rule="evenodd"><path d="M989 493L989 496L988 498L986 501L983 502L980 504L977 504L973 504L971 503L969 501L967 499L967 496L968 494L970 491L973 490L976 488L979 488L983 488L985 489L987 491Z" fill-opacity="0.360"/><path d="M770 560L850 515L905 560L910 640L870 700L830 690L785 640Z" fill-opacity="0.248"/><path d="M755 455L800 425L845 450L830 520L770 540Z" fill-opacity="0.180"/><path d="M1057 664L1057 666L1057 669L1055 673L1053 678L1051 682L1048 684L1047 685L1047 683L1047 680L1049 676L1051 671L1053 667L1056 665Z" fill-opacity="0.270"/><path d="M1086 392L1105 395L1127 424L1121 427L1089 400Z" fill-opacity="0.090"/><path d="M1400 347L1398 346L1394 342L1390 336L1386 328L1383 321L1381 316L1381 314L1383 315L1387 319L1391 325L1395 333L1398 340L1400 345Z" fill-opacity="0.083"/><path d="M1290 444L1287 442L1282 434L1275 422L1268 409L1262 397L1258 389L1258 385L1261 387L1266 395L1273 407L1280 420L1286 432L1290 440Z" fill-opacity="0.068"/></g><g filter="url(#nG3)" fill="#55f000" fill-rule="evenodd"><path d="M748 441L770 424L800 417L830 421L846 432L850 468L892 475L920 468L946 462L958 506L954 595L927 598L919 637L895 670L869 698L846 729L815 706L785 675L754 621L730 575L728 540L733 514L741 470Z" fill-opacity="0.158"/><path d="M1050 634L1049 636L1045 640L1038 643L1031 647L1024 649L1018 649L1016 648L1017 646L1021 642L1028 639L1035 635L1042 633L1048 633Z" fill-opacity="0.075"/></g><g filter="url(#nG4)" fill="#55f000" fill-rule="evenodd"><path d="M1140 360L1156 365L1186 397L1183 432L1167 432L1151 411L1135 395Z" fill-opacity="0.060"/><path d="M1259 384L1280 392L1291 443L1275 443L1261 419Z" fill-opacity="0.060"/><path d="M588 255L586 259L577 266L564 275L549 285L536 293L525 298L521 298L523 294L532 287L545 278L560 268L573 260L584 255Z" fill-opacity="0.033"/></g><g filter="url(#nG6)" fill="#55f000" fill-rule="evenodd"><path d="M472 234L521 177L564 158L569 172L521 215L480 236Z" fill-opacity="0.007"/></g><g filter="url(#nK1)" fill="url(#bgg)" fill-rule="evenodd"><path d="M877 530L903 521L923 570L897 580Z" fill-opacity="0.750"/><path d="M908 523L925 519L944 565L928 574Z" fill-opacity="0.700"/><path d="M679 625L690 625L692 643L681 643Z" fill-opacity="0.450"/></g><g filter="url(#nK3)" fill="url(#bgg)" fill-rule="evenodd"><path d="M915 478L946 468L952 505L930 512Z" fill-opacity="0.600"/><path d="M823 477L823 479L822 481L821 482L819 484L817 485L814 485L812 485L810 485L808 484L807 483L807 481L808 479L809 478L811 476L813 475L816 475L818 475L820 475L822 476Z" fill-opacity="0.300"/></g><g filter="url(#nK4)" fill="url(#bgg)" fill-rule="evenodd"><path d="M746 612L760 606L800 680L785 690Z" fill-opacity="0.550"/><path d="M880 523L878 526L875 529L870 530L864 530L858 530L852 528L847 526L843 523L841 520L840 517L842 514L845 511L850 510L856 510L862 510L868 512L873 514L877 517L879 520Z" fill-opacity="0.200"/></g><g filter="url(#nK5)" fill="url(#bgg)" fill-rule="evenodd"><path d="M695 545L722 545L726 590L700 600Z" fill-opacity="0.600"/></g></svg><svg style="position:absolute;left:0;top:0" width="1565" height="789" viewBox="355 80 1565 789" shape-rendering="crispEdges"><g stroke="#ffff00" stroke-width="1" fill="none"><path d="M441.5 80L428.5 869M448.5 80L436.5 843L433.5 869M436.5 843L1780 868.7M1843.5 80L1829.5 869M1850.5 80L1837.5 869"/></g><rect x="363" y="89" width="243" height="64" fill="#6a7982" fill-opacity="0.97"/><g fill="#ffffff"><rect x="1482" y="838.5" width="368" height="1.5"/><rect x="1482" y="836" width="1.5" height="7"/><rect x="1848.5" y="836" width="1.5" height="7"/></g><rect x="1884" y="814" width="3" height="21" fill="#00ff00"/><rect x="1884" y="835" width="3" height="4" fill="#00c0ff"/><rect x="1884" y="838" width="27" height="3" fill="#ff0000"/></svg><div class="t" style="left:16px;top:19px;font:bold 15px/1 'Liberation Mono',monospace;color:#86c21f">default point size</div><div class="t" style="left:16px;top:51px;font:bold 15px/1 'Liberation Mono',monospace;color:#86c21f">default line width</div><div style="position:absolute;left:193px;top:23px;width:15px;height:4px;background:linear-gradient(#9fd63a,#5e9a12);border-radius:1px"></div><div style="position:absolute;left:194px;top:55px;width:15px;height:4px;background:linear-gradient(#9fd63a,#5e9a12);border-radius:1px"></div><div style="position:absolute;left:226px;top:16px;width:16px;height:4px;background:linear-gradient(#9fd63a,#5e9a12);top:23px"></div><div style="position:absolute;left:231px;top:16px;width:5px;height:15px;background:linear-gradient(to right,#9fd63a,#5e9a12)"></div><div style="position:absolute;left:226px;top:55px;width:16px;height:4px;background:linear-gradient(#9fd63a,#5e9a12)"></div><div style="position:absolute;left:231px;top:49px;width:5px;height:15px;background:linear-gradient(to right,#9fd63a,#5e9a12)"></div><div class="t" style="left:719px;top:12px;font:14px/1 'Liberation Mono',monospace;color:#fff;transform:scaleX(0.833);transform-origin:0 0">Segmentation [OFF]</div><div class="t" style="left:1303px;top:768px;font:13px/1 'Liberation Mono',monospace;color:#fff;transform:scaleX(0.85);transform-origin:0 0">45</div></div><div style="position:absolute;left:35px;top:874px;width:1877px;height:19px;background:#d9d9d9;border:1px solid #bcbcbc;box-sizing:border-box"></div><div class="t" style="left:40px;top:878px;font-size:12.2px;color:#000;font-family:'Liberation Mono', monospace;font-weight:bold;transform:scaleX(0.82);transform-origin:0 0;">Console</div><svg style="position:absolute;left:1888px;top:878px" width="24" height="12"><path d="M3 1.5h5.5v5H6.5" fill="none" stroke="#000" stroke-width="1.6"/><rect x="1.2" y="4" width="5.3" height="5" fill="#fff" stroke="#000" stroke-width="1.6"/><path d="M16 2l7 7M23 2l-7 7" stroke="#000" stroke-width="1.7"/></svg><div style="position:absolute;left:44px;top:904px;width:1867px;height:97px;background:#fff;border:1px solid #828790;box-sizing:border-box"></div><div style="position:absolute;left:45px;top:905px;width:1848px;height:19px;background:#f5f5f5"></div><div class="t" style="left:49px;top:907px;font-size:13px;color:#000;font-family:'Liberation Sans', sans-serif;">[13:33:24] [ccGLWindow] 3D view initialized</div><div class="t" style="left:49px;top:926px;font-size:13px;color:#000;font-family:'Liberation Sans', sans-serif;">[13:33:24] [Global Shift] Max abs. coord = 1e+4 / max abs. diag = 1e+6</div><div style="position:absolute;left:45px;top:943px;width:1848px;height:19px;background:#f5f5f5"></div><div class="t" style="left:49px;top:945px;font-size:13px;color:#000;font-family:'Liberation Sans', sans-serif;">[13:39:10] [I/O] File &#39;E:\mySelf\GS\Result\HOME\8051b1c4-4\point_cloud\iteration_30000\point_cloud.ply&#39; loaded successfully</div><div class="t" style="left:49px;top:964px;font-size:13px;color:#000;font-family:'Liberation Sans', sans-serif;">[13:39:10] [VBO] VBO(s) (re)initialized for cloud &#39;point_cloud - Cloud&#39; (35.24 Mb = 100.00% of points could be loaded)</div><div style="position:absolute;left:1893px;top:905px;width:17px;height:94px;background:#f0f0f0"></div><div style="position:absolute;left:1900px;top:964px;width:3px;height:18px;background:#8a8a8a;border-radius:1px"></div><div class="t" style="left:6px;top:1015px;font-size:13px;color:#000;font-family:'Liberation Sans', sans-serif;">Sample points on a mesh</div><div style="position:absolute;left:0px;top:1032px;width:1928px;height:1px;background:#b6bac2"></div><div style="position:absolute;left:0px;top:1033px;width:1928px;height:7px;background:linear-gradient(to right,#d9e4f5,#dfe3f3 50%,#dde4f4)"></div><div style="position:absolute;left:1318px;top:1037px;width:38px;height:4px;background:#eef1fa;border-radius:3px 3px 0 0"></div><svg style="position:absolute;left:0;top:0" width="1928" height="1040"><rect x="583.5" y="30.5" width="37" height="60" rx="3" fill="none" stroke="#fe1a10" stroke-width="3.2"/><path d="M463 441.5L485 380L500.3 340L559.2 180L578.8 128L586.9 105.3L583.1 104.5L597.5 94L599.6 111.1L596.5 108L588.5 128L567.7 180L505.5 340L488 380L464.2 442Z" fill="#fe1a10"/></svg>
</body></html>
